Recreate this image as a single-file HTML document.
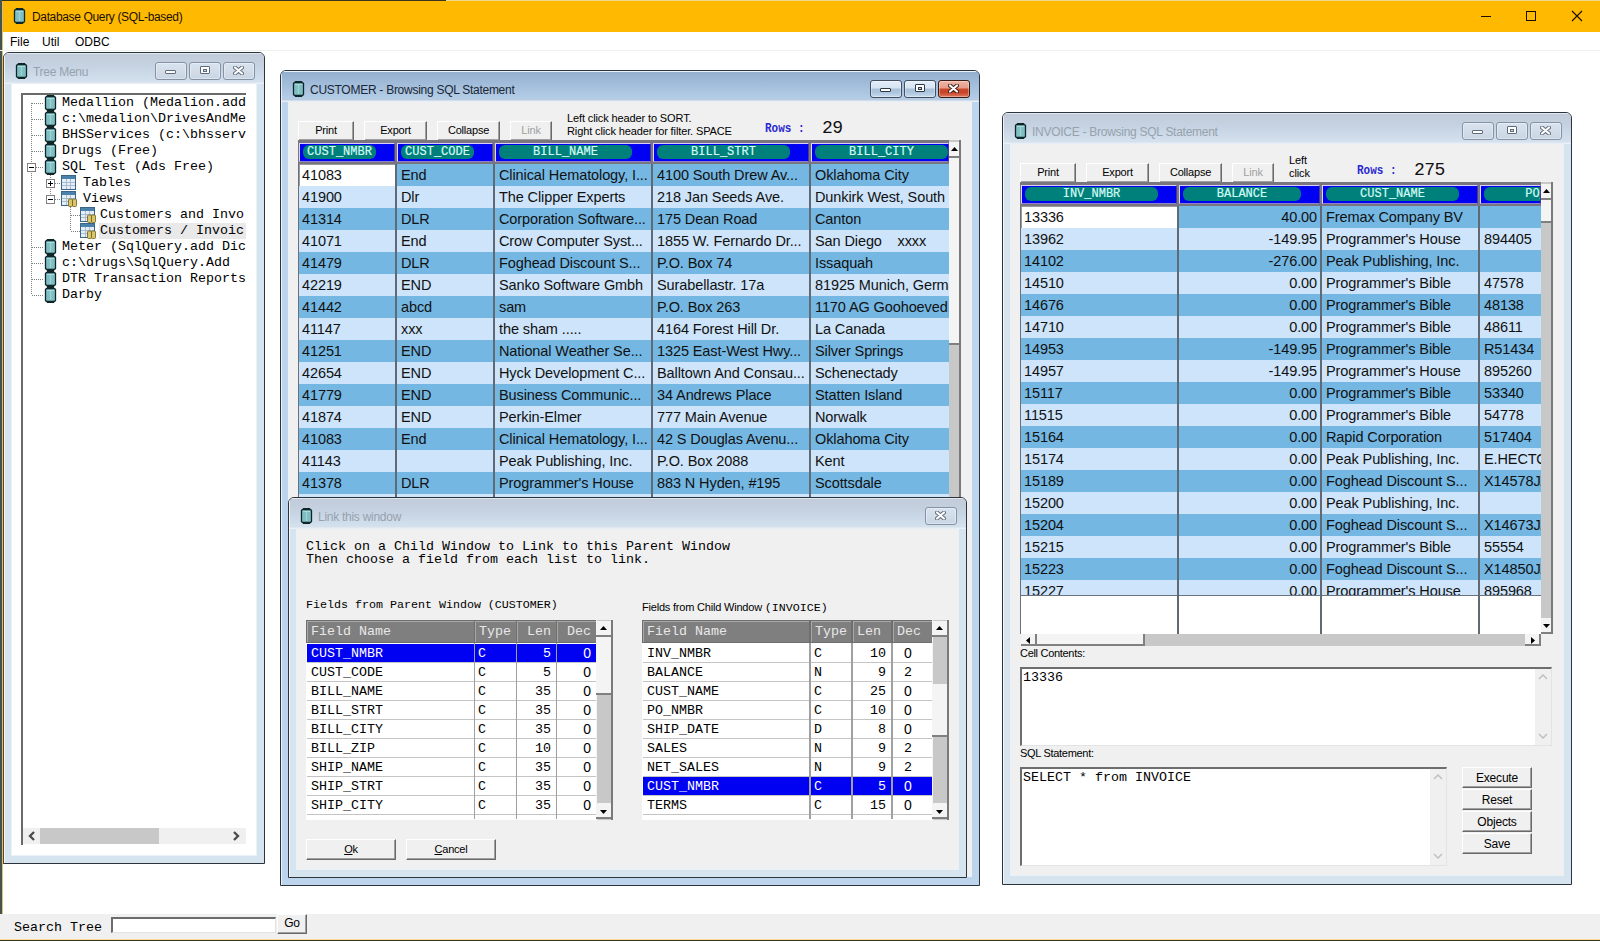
<!DOCTYPE html><html><head><meta charset="utf-8"><style>body{margin:0;width:1600px;height:941px;overflow:hidden;position:relative;background:#fff}</style></head><body>
<div style="position:absolute;left:0px;top:0px;width:1600px;height:32px;background:#ffb900"></div>
<div style="position:absolute;left:0px;top:0px;width:446px;height:1px;background:#3a3520"></div>
<div style="position:absolute;left:446px;top:0px;width:1154px;height:1px;background:#f0d98c"></div>
<div style="position:absolute;left:0px;top:0px;width:2px;height:941px;background:#45534a"></div>
<div style="position:absolute;left:2px;top:1px;width:1px;height:939px;background:#d8c07a"></div>
<svg style="position:absolute;left:13px;top:8px" width="13" height="16" viewBox="0 0 13 16"><path d="M1.5 2.5 L2.5 1.5 L10.5 1.5 L11.5 2.5 L11.5 13.5 L10.5 14.5 L2.5 14.5 L1.5 13.5 Z" fill="#7fbfc3" stroke="#0f2628" stroke-width="1.3"/><rect x="3" y="0" width="7" height="1.5" fill="#0f2628"/><rect x="3" y="14.5" width="7" height="1.5" fill="#0f2628"/><path d="M3 3.5 L10 3.5" stroke="#a9dadc" stroke-width="1"/><path d="M6.5 4 L6.5 13" stroke="#9fd2d4" stroke-width="1.2"/></svg>
<div style="position:absolute;left:32px;top:10px;white-space:pre;font-family:'Liberation Sans', sans-serif;font-size:12px;line-height:15px;color:#1a1000;letter-spacing:-0.35px">Database Query (SQL-based)</div>
<div style="position:absolute;left:1481px;top:16px;width:10px;height:1px;background:#1a0d00"></div>
<div style="position:absolute;left:1526px;top:11px;width:8px;height:8px;border:1px solid #1a0d00"></div>
<svg style="position:absolute;left:1571px;top:10px" width="12" height="12" viewBox="0 0 12 12"><path d="M1 1 L11 11 M11 1 L1 11" stroke="#1a0d00" stroke-width="1.1"/></svg>
<div style="position:absolute;left:10px;top:35px;white-space:pre;font-family:'Liberation Sans', sans-serif;font-size:12px;line-height:14px;color:#000">File</div>
<div style="position:absolute;left:42px;top:35px;white-space:pre;font-family:'Liberation Sans', sans-serif;font-size:12px;line-height:14px;color:#000">Util</div>
<div style="position:absolute;left:75px;top:35px;white-space:pre;font-family:'Liberation Sans', sans-serif;font-size:12px;line-height:14px;color:#000">ODBC</div>
<div style="position:absolute;left:0px;top:50px;width:1600px;height:1px;background:#f0f0f0"></div>
<div style="position:absolute;left:0px;top:914px;width:1600px;height:25px;background:#f0f0f0"></div>
<div style="position:absolute;left:0px;top:939px;width:1600px;height:1px;background:#ffd99a"></div>
<div style="position:absolute;left:0px;top:940px;width:1600px;height:1px;background:#3a3520"></div>
<div style="position:absolute;left:14px;top:920px;white-space:pre;font-family:'Liberation Mono', monospace;font-size:13.33px;line-height:15px;color:#000">Search Tree</div>
<div style="position:absolute;left:111px;top:917px;width:165px;height:16px;box-sizing:border-box;background:#fff;border-top:2px solid #6d6d6d;border-left:2px solid #6d6d6d;border-right:1px solid #e3e3e3;border-bottom:1px solid #e3e3e3"></div>
<div style="position:absolute;left:277px;top:914px;width:30px;height:20px;box-sizing:border-box;background:#f0f0f0;border-top:1px solid #fff;border-left:1px solid #fff;border-right:1px solid #696969;border-bottom:1px solid #696969;box-shadow:inset -1px -1px 0 #a0a0a0"></div>
<div style="position:absolute;left:277px;top:916px;width:30px;text-align:center;font-family:'Liberation Sans', sans-serif;font-size:12px;line-height:14px;color:#000;letter-spacing:-0.2px;white-space:pre">Go</div>
<div style="position:absolute;left:3px;top:52px;width:262px;height:812px;box-sizing:border-box;border:1px solid #2c333a;border-radius:6px 6px 0 0;background:#d6e4f0;overflow:hidden">
<div style="position:absolute;left:0;top:0;right:0;height:31px;background:linear-gradient(to bottom,#e0e8f3 0px,#e0e8f3 1px,#c2cbd9 1px,#c6d3e2 14px,#d2e0ee 27px,#d6e0ea 29px,#e8f0f8 30px)"></div>
<div style="position:absolute;left:0;top:0;width:1px;bottom:0;background:rgba(255,255,255,0.7)"></div>
<div style="position:absolute;left:7px;top:30px;right:7px;bottom:7px;background:#fff;box-sizing:border-box;border:1px solid #e9f1f9;border-top:1px solid #e6eef8"></div>
</div>
<svg style="position:absolute;left:15px;top:63px" width="13" height="16" viewBox="0 0 13 16"><path d="M1.5 2.5 L2.5 1.5 L10.5 1.5 L11.5 2.5 L11.5 13.5 L10.5 14.5 L2.5 14.5 L1.5 13.5 Z" fill="#7fbfc3" stroke="#0f2628" stroke-width="1.3"/><rect x="3" y="0" width="7" height="1.5" fill="#0f2628"/><rect x="3" y="14.5" width="7" height="1.5" fill="#0f2628"/><path d="M3 3.5 L10 3.5" stroke="#a9dadc" stroke-width="1"/><path d="M6.5 4 L6.5 13" stroke="#9fd2d4" stroke-width="1.2"/></svg>
<div style="position:absolute;left:33px;top:65px;white-space:pre;font-family:'Liberation Sans', sans-serif;font-size:12px;line-height:15px;color:#96a1ad;letter-spacing:-0.27px">Tree Menu</div>
<div style="position:absolute;left:155px;top:62px;width:32px;height:18px;box-sizing:border-box;border:1px solid #8592a4;border-radius:3px;background:linear-gradient(to bottom,#d9e3ef 0%,#d3dde9 50%,#c9d5e3 100%);box-shadow:inset 0 0 0 1px rgba(255,255,255,0.35)"></div>
<div style="position:absolute;left:165px;top:70px;width:9px;height:2px;box-sizing:content-box;background:#fff;border:1px solid #5f6b7a;border-radius:1px"></div>
<div style="position:absolute;left:189px;top:62px;width:32px;height:18px;box-sizing:border-box;border:1px solid #8592a4;border-radius:3px;background:linear-gradient(to bottom,#d9e3ef 0%,#d3dde9 50%,#c9d5e3 100%);box-shadow:inset 0 0 0 1px rgba(255,255,255,0.35)"></div>
<div style="position:absolute;left:200px;top:66px;width:8px;height:6px;box-sizing:content-box;border:1px solid #5f6b7a;background:#fff;border-radius:1px"><div style="position:absolute;left:2px;top:2px;width:2px;height:1px;border:1px solid #5f6b7a;background:#cdd8e4"></div></div>
<div style="position:absolute;left:223px;top:62px;width:32px;height:18px;box-sizing:border-box;border:1px solid #8592a4;border-radius:3px;background:linear-gradient(to bottom,#d9e3ef 0%,#d3dde9 50%,#c9d5e3 100%);box-shadow:inset 0 0 0 1px rgba(255,255,255,0.35)"></div>
<svg style="position:absolute;left:233px;top:66px" width="11" height="9" viewBox="0 0 11 9"><path d="M2 1.5 L9 7.5 M9 1.5 L2 7.5" stroke="#5f6b7a" stroke-width="4" stroke-linecap="round"/><path d="M2 1.5 L9 7.5 M9 1.5 L2 7.5" stroke="#fff" stroke-width="2.2" stroke-linecap="round"/></svg>
<div style="position:absolute;left:3px;top:58px;width:1px;height:806px;background:#5e4a22"></div>
<div style="position:absolute;left:21px;top:93px;width:225px;height:752px;box-sizing:border-box;background:#fff;border-top:2px solid #6a6a6a;border-left:2px solid #6a6a6a"></div>
<div style="position:absolute;left:31px;top:103px;width:1px;height:191px;background:repeating-linear-gradient(to bottom,#808080 0 1px,transparent 1px 2px)"></div>
<div style="position:absolute;left:50px;top:175px;width:1px;height:24px;background:repeating-linear-gradient(to bottom,#808080 0 1px,transparent 1px 2px)"></div>
<div style="position:absolute;left:70px;top:207px;width:1px;height:23px;background:repeating-linear-gradient(to bottom,#808080 0 1px,transparent 1px 2px)"></div>
<div style="position:absolute;left:32px;top:103px;width:11px;height:1px;background:repeating-linear-gradient(to right,#808080 0 1px,transparent 1px 2px)"></div>
<svg style="position:absolute;left:44px;top:95px" width="13" height="16" viewBox="0 0 13 16"><path d="M1.5 2.5 L2.5 1.5 L10.5 1.5 L11.5 2.5 L11.5 13.5 L10.5 14.5 L2.5 14.5 L1.5 13.5 Z" fill="#7fbfc3" stroke="#0f2628" stroke-width="1.3"/><rect x="3" y="0" width="7" height="1.5" fill="#0f2628"/><rect x="3" y="14.5" width="7" height="1.5" fill="#0f2628"/><path d="M3 3.5 L10 3.5" stroke="#a9dadc" stroke-width="1"/><path d="M6.5 4 L6.5 13" stroke="#9fd2d4" stroke-width="1.2"/></svg>
<div style="position:absolute;left:62px;top:95px;white-space:pre;font-family:'Liberation Mono', monospace;font-size:13.33px;line-height:15px;color:#000">Medallion (Medalion.add</div>
<div style="position:absolute;left:32px;top:119px;width:11px;height:1px;background:repeating-linear-gradient(to right,#808080 0 1px,transparent 1px 2px)"></div>
<svg style="position:absolute;left:44px;top:111px" width="13" height="16" viewBox="0 0 13 16"><path d="M1.5 2.5 L2.5 1.5 L10.5 1.5 L11.5 2.5 L11.5 13.5 L10.5 14.5 L2.5 14.5 L1.5 13.5 Z" fill="#7fbfc3" stroke="#0f2628" stroke-width="1.3"/><rect x="3" y="0" width="7" height="1.5" fill="#0f2628"/><rect x="3" y="14.5" width="7" height="1.5" fill="#0f2628"/><path d="M3 3.5 L10 3.5" stroke="#a9dadc" stroke-width="1"/><path d="M6.5 4 L6.5 13" stroke="#9fd2d4" stroke-width="1.2"/></svg>
<div style="position:absolute;left:62px;top:111px;white-space:pre;font-family:'Liberation Mono', monospace;font-size:13.33px;line-height:15px;color:#000">c:\medalion\DrivesAndMe</div>
<div style="position:absolute;left:32px;top:135px;width:11px;height:1px;background:repeating-linear-gradient(to right,#808080 0 1px,transparent 1px 2px)"></div>
<svg style="position:absolute;left:44px;top:127px" width="13" height="16" viewBox="0 0 13 16"><path d="M1.5 2.5 L2.5 1.5 L10.5 1.5 L11.5 2.5 L11.5 13.5 L10.5 14.5 L2.5 14.5 L1.5 13.5 Z" fill="#7fbfc3" stroke="#0f2628" stroke-width="1.3"/><rect x="3" y="0" width="7" height="1.5" fill="#0f2628"/><rect x="3" y="14.5" width="7" height="1.5" fill="#0f2628"/><path d="M3 3.5 L10 3.5" stroke="#a9dadc" stroke-width="1"/><path d="M6.5 4 L6.5 13" stroke="#9fd2d4" stroke-width="1.2"/></svg>
<div style="position:absolute;left:62px;top:127px;white-space:pre;font-family:'Liberation Mono', monospace;font-size:13.33px;line-height:15px;color:#000">BHSServices (c:\bhsserv</div>
<div style="position:absolute;left:32px;top:151px;width:11px;height:1px;background:repeating-linear-gradient(to right,#808080 0 1px,transparent 1px 2px)"></div>
<svg style="position:absolute;left:44px;top:143px" width="13" height="16" viewBox="0 0 13 16"><path d="M1.5 2.5 L2.5 1.5 L10.5 1.5 L11.5 2.5 L11.5 13.5 L10.5 14.5 L2.5 14.5 L1.5 13.5 Z" fill="#7fbfc3" stroke="#0f2628" stroke-width="1.3"/><rect x="3" y="0" width="7" height="1.5" fill="#0f2628"/><rect x="3" y="14.5" width="7" height="1.5" fill="#0f2628"/><path d="M3 3.5 L10 3.5" stroke="#a9dadc" stroke-width="1"/><path d="M6.5 4 L6.5 13" stroke="#9fd2d4" stroke-width="1.2"/></svg>
<div style="position:absolute;left:62px;top:143px;white-space:pre;font-family:'Liberation Mono', monospace;font-size:13.33px;line-height:15px;color:#000">Drugs (Free)</div>
<div style="position:absolute;left:32px;top:167px;width:11px;height:1px;background:repeating-linear-gradient(to right,#808080 0 1px,transparent 1px 2px)"></div>
<svg style="position:absolute;left:44px;top:159px" width="13" height="16" viewBox="0 0 13 16"><path d="M1.5 2.5 L2.5 1.5 L10.5 1.5 L11.5 2.5 L11.5 13.5 L10.5 14.5 L2.5 14.5 L1.5 13.5 Z" fill="#7fbfc3" stroke="#0f2628" stroke-width="1.3"/><rect x="3" y="0" width="7" height="1.5" fill="#0f2628"/><rect x="3" y="14.5" width="7" height="1.5" fill="#0f2628"/><path d="M3 3.5 L10 3.5" stroke="#a9dadc" stroke-width="1"/><path d="M6.5 4 L6.5 13" stroke="#9fd2d4" stroke-width="1.2"/></svg>
<div style="position:absolute;left:62px;top:159px;white-space:pre;font-family:'Liberation Mono', monospace;font-size:13.33px;line-height:15px;color:#000">SQL Test (Ads Free)</div>
<div style="position:absolute;left:51px;top:183px;width:9px;height:1px;background:repeating-linear-gradient(to right,#808080 0 1px,transparent 1px 2px)"></div>
<svg style="position:absolute;left:61px;top:175px" width="16" height="16" viewBox="0 0 16 16"><rect x="0.5" y="0.5" width="14" height="14" fill="#e6edf4" stroke="#3b6486"/><rect x="1" y="1" width="13" height="3" fill="#4a82ad"/><path d="M1 7.5 H14 M1 10.5 H14 M5.5 4 V14 M9.5 4 V14" stroke="#a6bdd2" stroke-width="1"/></svg>
<div style="position:absolute;left:83px;top:175px;white-space:pre;font-family:'Liberation Mono', monospace;font-size:13.33px;line-height:15px;color:#000">Tables</div>
<div style="position:absolute;left:51px;top:199px;width:9px;height:1px;background:repeating-linear-gradient(to right,#808080 0 1px,transparent 1px 2px)"></div>
<svg style="position:absolute;left:61px;top:191px" width="16" height="16" viewBox="0 0 16 16"><rect x="0.5" y="0.5" width="14" height="14" fill="#e6edf4" stroke="#3b6486"/><rect x="1" y="1" width="13" height="3" fill="#4a82ad"/><path d="M1 7.5 H14 M1 10.5 H14 M5.5 4 V14 M9.5 4 V14" stroke="#a6bdd2" stroke-width="1"/><rect x="7.5" y="8" width="4" height="7.5" rx="1" fill="#d9c66a" stroke="#6f6020" stroke-width="0.8"/><rect x="11.5" y="8" width="4" height="7.5" rx="1" fill="#d9c66a" stroke="#6f6020" stroke-width="0.8"/></svg>
<div style="position:absolute;left:83px;top:191px;white-space:pre;font-family:'Liberation Mono', monospace;font-size:13.33px;line-height:15px;color:#000">Views</div>
<div style="position:absolute;left:71px;top:215px;width:9px;height:1px;background:repeating-linear-gradient(to right,#808080 0 1px,transparent 1px 2px)"></div>
<svg style="position:absolute;left:80px;top:207px" width="16" height="16" viewBox="0 0 16 16"><rect x="0.5" y="0.5" width="14" height="14" fill="#e6edf4" stroke="#3b6486"/><rect x="1" y="1" width="13" height="3" fill="#4a82ad"/><path d="M1 7.5 H14 M1 10.5 H14 M5.5 4 V14 M9.5 4 V14" stroke="#a6bdd2" stroke-width="1"/><rect x="7.5" y="8" width="4" height="7.5" rx="1" fill="#d9c66a" stroke="#6f6020" stroke-width="0.8"/><rect x="11.5" y="8" width="4" height="7.5" rx="1" fill="#d9c66a" stroke="#6f6020" stroke-width="0.8"/></svg>
<div style="position:absolute;left:100px;top:207px;white-space:pre;font-family:'Liberation Mono', monospace;font-size:13.33px;line-height:15px;color:#000">Customers and Invo</div>
<div style="position:absolute;left:71px;top:231px;width:9px;height:1px;background:repeating-linear-gradient(to right,#808080 0 1px,transparent 1px 2px)"></div>
<div style="position:absolute;left:99px;top:223px;width:147px;height:16px;background:#e9e9e9"></div>
<svg style="position:absolute;left:80px;top:223px" width="16" height="16" viewBox="0 0 16 16"><rect x="0.5" y="0.5" width="14" height="14" fill="#e6edf4" stroke="#3b6486"/><rect x="1" y="1" width="13" height="3" fill="#4a82ad"/><path d="M1 7.5 H14 M1 10.5 H14 M5.5 4 V14 M9.5 4 V14" stroke="#a6bdd2" stroke-width="1"/><rect x="7.5" y="8" width="4" height="7.5" rx="1" fill="#d9c66a" stroke="#6f6020" stroke-width="0.8"/><rect x="11.5" y="8" width="4" height="7.5" rx="1" fill="#d9c66a" stroke="#6f6020" stroke-width="0.8"/></svg>
<div style="position:absolute;left:100px;top:223px;white-space:pre;font-family:'Liberation Mono', monospace;font-size:13.33px;line-height:15px;color:#000">Customers / Invoic</div>
<div style="position:absolute;left:32px;top:247px;width:11px;height:1px;background:repeating-linear-gradient(to right,#808080 0 1px,transparent 1px 2px)"></div>
<svg style="position:absolute;left:44px;top:239px" width="13" height="16" viewBox="0 0 13 16"><path d="M1.5 2.5 L2.5 1.5 L10.5 1.5 L11.5 2.5 L11.5 13.5 L10.5 14.5 L2.5 14.5 L1.5 13.5 Z" fill="#7fbfc3" stroke="#0f2628" stroke-width="1.3"/><rect x="3" y="0" width="7" height="1.5" fill="#0f2628"/><rect x="3" y="14.5" width="7" height="1.5" fill="#0f2628"/><path d="M3 3.5 L10 3.5" stroke="#a9dadc" stroke-width="1"/><path d="M6.5 4 L6.5 13" stroke="#9fd2d4" stroke-width="1.2"/></svg>
<div style="position:absolute;left:62px;top:239px;white-space:pre;font-family:'Liberation Mono', monospace;font-size:13.33px;line-height:15px;color:#000">Meter (SqlQuery.add Dic</div>
<div style="position:absolute;left:32px;top:263px;width:11px;height:1px;background:repeating-linear-gradient(to right,#808080 0 1px,transparent 1px 2px)"></div>
<svg style="position:absolute;left:44px;top:255px" width="13" height="16" viewBox="0 0 13 16"><path d="M1.5 2.5 L2.5 1.5 L10.5 1.5 L11.5 2.5 L11.5 13.5 L10.5 14.5 L2.5 14.5 L1.5 13.5 Z" fill="#7fbfc3" stroke="#0f2628" stroke-width="1.3"/><rect x="3" y="0" width="7" height="1.5" fill="#0f2628"/><rect x="3" y="14.5" width="7" height="1.5" fill="#0f2628"/><path d="M3 3.5 L10 3.5" stroke="#a9dadc" stroke-width="1"/><path d="M6.5 4 L6.5 13" stroke="#9fd2d4" stroke-width="1.2"/></svg>
<div style="position:absolute;left:62px;top:255px;white-space:pre;font-family:'Liberation Mono', monospace;font-size:13.33px;line-height:15px;color:#000">c:\drugs\SqlQuery.Add</div>
<div style="position:absolute;left:32px;top:279px;width:11px;height:1px;background:repeating-linear-gradient(to right,#808080 0 1px,transparent 1px 2px)"></div>
<svg style="position:absolute;left:44px;top:271px" width="13" height="16" viewBox="0 0 13 16"><path d="M1.5 2.5 L2.5 1.5 L10.5 1.5 L11.5 2.5 L11.5 13.5 L10.5 14.5 L2.5 14.5 L1.5 13.5 Z" fill="#7fbfc3" stroke="#0f2628" stroke-width="1.3"/><rect x="3" y="0" width="7" height="1.5" fill="#0f2628"/><rect x="3" y="14.5" width="7" height="1.5" fill="#0f2628"/><path d="M3 3.5 L10 3.5" stroke="#a9dadc" stroke-width="1"/><path d="M6.5 4 L6.5 13" stroke="#9fd2d4" stroke-width="1.2"/></svg>
<div style="position:absolute;left:62px;top:271px;white-space:pre;font-family:'Liberation Mono', monospace;font-size:13.33px;line-height:15px;color:#000">DTR Transaction Reports</div>
<div style="position:absolute;left:32px;top:295px;width:11px;height:1px;background:repeating-linear-gradient(to right,#808080 0 1px,transparent 1px 2px)"></div>
<svg style="position:absolute;left:44px;top:287px" width="13" height="16" viewBox="0 0 13 16"><path d="M1.5 2.5 L2.5 1.5 L10.5 1.5 L11.5 2.5 L11.5 13.5 L10.5 14.5 L2.5 14.5 L1.5 13.5 Z" fill="#7fbfc3" stroke="#0f2628" stroke-width="1.3"/><rect x="3" y="0" width="7" height="1.5" fill="#0f2628"/><rect x="3" y="14.5" width="7" height="1.5" fill="#0f2628"/><path d="M3 3.5 L10 3.5" stroke="#a9dadc" stroke-width="1"/><path d="M6.5 4 L6.5 13" stroke="#9fd2d4" stroke-width="1.2"/></svg>
<div style="position:absolute;left:62px;top:287px;white-space:pre;font-family:'Liberation Mono', monospace;font-size:13.33px;line-height:15px;color:#000">Darby</div>
<div style="position:absolute;left:27px;top:163px;width:9px;height:9px;box-sizing:border-box;border:1px solid #808080;background:#fff"></div>
<div style="position:absolute;left:29px;top:167px;width:5px;height:1px;background:#000"></div>
<div style="position:absolute;left:46px;top:179px;width:9px;height:9px;box-sizing:border-box;border:1px solid #808080;background:#fff"></div>
<div style="position:absolute;left:48px;top:183px;width:5px;height:1px;background:#000"></div>
<div style="position:absolute;left:50px;top:181px;width:1px;height:5px;background:#000"></div>
<div style="position:absolute;left:46px;top:195px;width:9px;height:9px;box-sizing:border-box;border:1px solid #808080;background:#fff"></div>
<div style="position:absolute;left:48px;top:199px;width:5px;height:1px;background:#000"></div>
<div style="position:absolute;left:246px;top:93px;width:10px;height:752px;background:#fff"></div>
<div style="position:absolute;left:23px;top:828px;width:223px;height:16px;background:#f0f0f0"></div>
<div style="position:absolute;left:40px;top:828px;width:119px;height:16px;background:#c8c8c8"></div>
<svg style="position:absolute;left:28px;top:831px" width="8" height="10" viewBox="0 0 8 10"><path d="M6 1 L2 5 L6 9" fill="none" stroke="#4a4a4a" stroke-width="2.3"/></svg>
<svg style="position:absolute;left:232px;top:831px" width="8" height="10" viewBox="0 0 8 10"><path d="M2 1 L6 5 L2 9" fill="none" stroke="#4a4a4a" stroke-width="2.3"/></svg>
<div style="position:absolute;left:280px;top:70px;width:700px;height:816px;box-sizing:border-box;border:1px solid #2c333a;border-radius:6px 6px 0 0;background:#bcd4ec;overflow:hidden">
<div style="position:absolute;left:0;top:0;right:0;height:31px;background:linear-gradient(to bottom,#eaf4fb 0px,#eaf4fb 1px,#93b0d0 1px,#a3bedb 14px,#b3cce7 27px,#bccbdc 29px,#e6eef8 30px)"></div>
<div style="position:absolute;left:0;top:0;width:1px;bottom:0;background:rgba(255,255,255,0.7)"></div>
<div style="position:absolute;left:7px;top:30px;right:7px;bottom:8px;background:#f0f0f0;box-sizing:border-box;border:1px solid #e9f1f9;border-top:1px solid #e6eef8"></div>
</div>
<svg style="position:absolute;left:292px;top:81px" width="13" height="16" viewBox="0 0 13 16"><path d="M1.5 2.5 L2.5 1.5 L10.5 1.5 L11.5 2.5 L11.5 13.5 L10.5 14.5 L2.5 14.5 L1.5 13.5 Z" fill="#7fbfc3" stroke="#0f2628" stroke-width="1.3"/><rect x="3" y="0" width="7" height="1.5" fill="#0f2628"/><rect x="3" y="14.5" width="7" height="1.5" fill="#0f2628"/><path d="M3 3.5 L10 3.5" stroke="#a9dadc" stroke-width="1"/><path d="M6.5 4 L6.5 13" stroke="#9fd2d4" stroke-width="1.2"/></svg>
<div style="position:absolute;left:310px;top:83px;white-space:pre;font-family:'Liberation Sans', sans-serif;font-size:12px;line-height:15px;color:#1b2735;letter-spacing:-0.27px">CUSTOMER - Browsing SQL Statement</div>
<div style="position:absolute;left:870px;top:80px;width:32px;height:18px;box-sizing:border-box;border:1px solid #3f4e60;border-radius:3px;background:linear-gradient(to bottom,#e4eef9 0%,#d5e3f2 44%,#a9c0d9 50%,#aec5de 72%,#c9dbef 100%);box-shadow:inset 0 0 0 1px rgba(255,255,255,0.35)"></div>
<div style="position:absolute;left:880px;top:88px;width:9px;height:2px;box-sizing:content-box;background:#fff;border:1px solid #2c3846;border-radius:1px"></div>
<div style="position:absolute;left:904px;top:80px;width:32px;height:18px;box-sizing:border-box;border:1px solid #3f4e60;border-radius:3px;background:linear-gradient(to bottom,#e4eef9 0%,#d5e3f2 44%,#a9c0d9 50%,#aec5de 72%,#c9dbef 100%);box-shadow:inset 0 0 0 1px rgba(255,255,255,0.35)"></div>
<div style="position:absolute;left:915px;top:84px;width:8px;height:6px;box-sizing:content-box;border:1px solid #2c3846;background:#fff;border-radius:1px"><div style="position:absolute;left:2px;top:2px;width:2px;height:1px;border:1px solid #2c3846;background:#cdd8e4"></div></div>
<div style="position:absolute;left:938px;top:80px;width:32px;height:18px;box-sizing:border-box;border:1px solid #3b1a16;border-radius:3px;background:linear-gradient(to bottom,#edb6a6 0%,#e59d88 44%,#c9492a 50%,#c6442a 72%,#de7a5e 100%);box-shadow:inset 0 0 0 1px rgba(255,255,255,0.35)"></div>
<svg style="position:absolute;left:948px;top:84px" width="11" height="9" viewBox="0 0 11 9"><path d="M2 1.5 L9 7.5 M9 1.5 L2 7.5" stroke="#3a1a14" stroke-width="4" stroke-linecap="round"/><path d="M2 1.5 L9 7.5 M9 1.5 L2 7.5" stroke="#fff" stroke-width="2.2" stroke-linecap="round"/></svg>
<div style="position:absolute;left:298px;top:121px;width:56px;height:20px;box-sizing:border-box;background:#f0f0f0;border-top:1px solid #fff;border-left:1px solid #fff;border-right:1px solid #696969;border-bottom:1px solid #696969;box-shadow:inset -1px -1px 0 #a0a0a0"></div>
<div style="position:absolute;left:298px;top:123px;width:56px;text-align:center;font-family:'Liberation Sans', sans-serif;font-size:11px;line-height:14px;color:#000;letter-spacing:-0.2px;white-space:pre">Print</div>
<div style="position:absolute;left:364px;top:121px;width:63px;height:20px;box-sizing:border-box;background:#f0f0f0;border-top:1px solid #fff;border-left:1px solid #fff;border-right:1px solid #696969;border-bottom:1px solid #696969;box-shadow:inset -1px -1px 0 #a0a0a0"></div>
<div style="position:absolute;left:364px;top:123px;width:63px;text-align:center;font-family:'Liberation Sans', sans-serif;font-size:11px;line-height:14px;color:#000;letter-spacing:-0.2px;white-space:pre">Export</div>
<div style="position:absolute;left:437px;top:121px;width:63px;height:20px;box-sizing:border-box;background:#f0f0f0;border-top:1px solid #fff;border-left:1px solid #fff;border-right:1px solid #696969;border-bottom:1px solid #696969;box-shadow:inset -1px -1px 0 #a0a0a0"></div>
<div style="position:absolute;left:437px;top:123px;width:63px;text-align:center;font-family:'Liberation Sans', sans-serif;font-size:11px;line-height:14px;color:#000;letter-spacing:-0.2px;white-space:pre">Collapse</div>
<div style="position:absolute;left:510px;top:121px;width:42px;height:20px;box-sizing:border-box;background:#f0f0f0;border-top:1px solid #fff;border-left:1px solid #fff;border-right:1px solid #696969;border-bottom:1px solid #696969;box-shadow:inset -1px -1px 0 #a0a0a0"></div>
<div style="position:absolute;left:510px;top:123px;width:42px;text-align:center;font-family:'Liberation Sans', sans-serif;font-size:11px;line-height:14px;color:#a0a0a0;letter-spacing:-0.2px;white-space:pre">Link</div>
<div style="position:absolute;left:567px;top:112px;white-space:pre;font-family:'Liberation Sans', sans-serif;font-size:11px;line-height:13px;color:#000;letter-spacing:-0.12px">Left click header to SORT.</div>
<div style="position:absolute;left:567px;top:125px;white-space:pre;font-family:'Liberation Sans', sans-serif;font-size:11px;line-height:13px;color:#000;letter-spacing:-0.12px">Right click header for filter. SPACE</div>
<div style="position:absolute;left:567px;top:138px;white-space:pre;font-family:'Liberation Sans', sans-serif;font-size:11px;line-height:13px;color:#000;letter-spacing:-0.12px">to Expand cell.</div>
<div style="position:absolute;left:765px;top:121px;white-space:pre;font-family:'Liberation Mono', monospace;font-weight:bold;font-size:11px;transform:scaleY(1.12);transform-origin:0 0;line-height:14px;color:#2828d0">Rows :</div>
<div style="position:absolute;left:822px;top:118px;white-space:pre;font-family:'Liberation Mono', monospace;font-size:18px;line-height:21px;color:#111;letter-spacing:-0.6px">29</div>
<div style="position:absolute;left:298px;top:140px;width:651px;height:24px;background:#7a7680"></div>
<div style="position:absolute;left:299px;top:143px;width:96px;height:19px;background:#0000f2;box-sizing:border-box;border-top:1px solid #d8d0f8;border-left:1px solid #e0d8f8;border-right:1px solid #4838a0;border-bottom:1px solid #9080d0;overflow:hidden"><div style="position:absolute;left:3px;top:1px;width:73px;height:14px;background:#00807a;border-radius:6px;text-align:center;font-family:'Liberation Mono', monospace;font-weight:normal;font-size:12px;line-height:14px;color:#d2fbf4;-webkit-text-stroke:0.2px #d2fbf4">CUST_NMBR</div></div>
<div style="position:absolute;left:397px;top:143px;width:96px;height:19px;background:#0000f2;box-sizing:border-box;border-top:1px solid #d8d0f8;border-left:1px solid #e0d8f8;border-right:1px solid #4838a0;border-bottom:1px solid #9080d0;overflow:hidden"><div style="position:absolute;left:3px;top:1px;width:73px;height:14px;background:#00807a;border-radius:6px;text-align:center;font-family:'Liberation Mono', monospace;font-weight:normal;font-size:12px;line-height:14px;color:#d2fbf4;-webkit-text-stroke:0.2px #d2fbf4">CUST_CODE</div></div>
<div style="position:absolute;left:495px;top:143px;width:156px;height:19px;background:#0000f2;box-sizing:border-box;border-top:1px solid #d8d0f8;border-left:1px solid #e0d8f8;border-right:1px solid #4838a0;border-bottom:1px solid #9080d0;overflow:hidden"><div style="position:absolute;left:3px;top:1px;width:133px;height:14px;background:#00807a;border-radius:6px;text-align:center;font-family:'Liberation Mono', monospace;font-weight:normal;font-size:12px;line-height:14px;color:#d2fbf4;-webkit-text-stroke:0.2px #d2fbf4">BILL_NAME</div></div>
<div style="position:absolute;left:653px;top:143px;width:156px;height:19px;background:#0000f2;box-sizing:border-box;border-top:1px solid #d8d0f8;border-left:1px solid #e0d8f8;border-right:1px solid #4838a0;border-bottom:1px solid #9080d0;overflow:hidden"><div style="position:absolute;left:3px;top:1px;width:133px;height:14px;background:#00807a;border-radius:6px;text-align:center;font-family:'Liberation Mono', monospace;font-weight:normal;font-size:12px;line-height:14px;color:#d2fbf4;-webkit-text-stroke:0.2px #d2fbf4">BILL_STRT</div></div>
<div style="position:absolute;left:811px;top:143px;width:138px;height:19px;background:#0000f2;box-sizing:border-box;border-top:1px solid #d8d0f8;border-left:1px solid #e0d8f8;border-right:1px solid #4838a0;border-bottom:1px solid #9080d0;overflow:hidden"><div style="position:absolute;left:3px;top:1px;width:133px;height:14px;background:#00807a;border-radius:6px;text-align:center;font-family:'Liberation Mono', monospace;font-weight:normal;font-size:12px;line-height:14px;color:#d2fbf4;-webkit-text-stroke:0.2px #d2fbf4">BILL_CITY</div></div>
<div style="position:absolute;left:298px;top:164px;width:1px;height:352px;background:#6a7078"></div>
<div style="position:absolute;left:299px;top:164px;width:650px;height:352px;overflow:hidden">
<div style="position:absolute;left:-1px;top:0px;width:97px;height:22px;box-sizing:border-box;background:#fff;padding-left:4px;text-align:left;font-family:'Liberation Sans', sans-serif;font-size:14.5px;line-height:23px;color:#111;letter-spacing:-0.1px;white-space:pre;overflow:hidden">41083</div>
<div style="position:absolute;left:98px;top:0px;width:96px;height:22px;box-sizing:border-box;background:#74b7e3;padding-left:4px;text-align:left;font-family:'Liberation Sans', sans-serif;font-size:14.5px;line-height:23px;color:#111;letter-spacing:-0.1px;white-space:pre;overflow:hidden">End</div>
<div style="position:absolute;left:196px;top:0px;width:156px;height:22px;box-sizing:border-box;background:#74b7e3;padding-left:4px;text-align:left;font-family:'Liberation Sans', sans-serif;font-size:14.5px;line-height:23px;color:#111;letter-spacing:-0.1px;white-space:pre;overflow:hidden">Clinical Hematology, I...</div>
<div style="position:absolute;left:354px;top:0px;width:156px;height:22px;box-sizing:border-box;background:#74b7e3;padding-left:4px;text-align:left;font-family:'Liberation Sans', sans-serif;font-size:14.5px;line-height:23px;color:#111;letter-spacing:-0.1px;white-space:pre;overflow:hidden">4100 South Drew Av...</div>
<div style="position:absolute;left:512px;top:0px;width:138px;height:22px;box-sizing:border-box;background:#74b7e3;padding-left:4px;text-align:left;font-family:'Liberation Sans', sans-serif;font-size:14.5px;line-height:23px;color:#111;letter-spacing:-0.1px;white-space:pre;overflow:hidden">Oklahoma City</div>
<div style="position:absolute;left:-1px;top:22px;width:97px;height:22px;box-sizing:border-box;background:#cde4fa;padding-left:4px;text-align:left;font-family:'Liberation Sans', sans-serif;font-size:14.5px;line-height:23px;color:#111;letter-spacing:-0.1px;white-space:pre;overflow:hidden">41900</div>
<div style="position:absolute;left:98px;top:22px;width:96px;height:22px;box-sizing:border-box;background:#cde4fa;padding-left:4px;text-align:left;font-family:'Liberation Sans', sans-serif;font-size:14.5px;line-height:23px;color:#111;letter-spacing:-0.1px;white-space:pre;overflow:hidden">Dlr</div>
<div style="position:absolute;left:196px;top:22px;width:156px;height:22px;box-sizing:border-box;background:#cde4fa;padding-left:4px;text-align:left;font-family:'Liberation Sans', sans-serif;font-size:14.5px;line-height:23px;color:#111;letter-spacing:-0.1px;white-space:pre;overflow:hidden">The Clipper Experts</div>
<div style="position:absolute;left:354px;top:22px;width:156px;height:22px;box-sizing:border-box;background:#cde4fa;padding-left:4px;text-align:left;font-family:'Liberation Sans', sans-serif;font-size:14.5px;line-height:23px;color:#111;letter-spacing:-0.1px;white-space:pre;overflow:hidden">218 Jan Seeds Ave.</div>
<div style="position:absolute;left:512px;top:22px;width:138px;height:22px;box-sizing:border-box;background:#cde4fa;padding-left:4px;text-align:left;font-family:'Liberation Sans', sans-serif;font-size:14.5px;line-height:23px;color:#111;letter-spacing:-0.1px;white-space:pre;overflow:hidden">Dunkirk West, South</div>
<div style="position:absolute;left:-1px;top:44px;width:97px;height:22px;box-sizing:border-box;background:#74b7e3;padding-left:4px;text-align:left;font-family:'Liberation Sans', sans-serif;font-size:14.5px;line-height:23px;color:#111;letter-spacing:-0.1px;white-space:pre;overflow:hidden">41314</div>
<div style="position:absolute;left:98px;top:44px;width:96px;height:22px;box-sizing:border-box;background:#74b7e3;padding-left:4px;text-align:left;font-family:'Liberation Sans', sans-serif;font-size:14.5px;line-height:23px;color:#111;letter-spacing:-0.1px;white-space:pre;overflow:hidden">DLR</div>
<div style="position:absolute;left:196px;top:44px;width:156px;height:22px;box-sizing:border-box;background:#74b7e3;padding-left:4px;text-align:left;font-family:'Liberation Sans', sans-serif;font-size:14.5px;line-height:23px;color:#111;letter-spacing:-0.1px;white-space:pre;overflow:hidden">Corporation Software...</div>
<div style="position:absolute;left:354px;top:44px;width:156px;height:22px;box-sizing:border-box;background:#74b7e3;padding-left:4px;text-align:left;font-family:'Liberation Sans', sans-serif;font-size:14.5px;line-height:23px;color:#111;letter-spacing:-0.1px;white-space:pre;overflow:hidden">175 Dean Road</div>
<div style="position:absolute;left:512px;top:44px;width:138px;height:22px;box-sizing:border-box;background:#74b7e3;padding-left:4px;text-align:left;font-family:'Liberation Sans', sans-serif;font-size:14.5px;line-height:23px;color:#111;letter-spacing:-0.1px;white-space:pre;overflow:hidden">Canton</div>
<div style="position:absolute;left:-1px;top:66px;width:97px;height:22px;box-sizing:border-box;background:#cde4fa;padding-left:4px;text-align:left;font-family:'Liberation Sans', sans-serif;font-size:14.5px;line-height:23px;color:#111;letter-spacing:-0.1px;white-space:pre;overflow:hidden">41071</div>
<div style="position:absolute;left:98px;top:66px;width:96px;height:22px;box-sizing:border-box;background:#cde4fa;padding-left:4px;text-align:left;font-family:'Liberation Sans', sans-serif;font-size:14.5px;line-height:23px;color:#111;letter-spacing:-0.1px;white-space:pre;overflow:hidden">End</div>
<div style="position:absolute;left:196px;top:66px;width:156px;height:22px;box-sizing:border-box;background:#cde4fa;padding-left:4px;text-align:left;font-family:'Liberation Sans', sans-serif;font-size:14.5px;line-height:23px;color:#111;letter-spacing:-0.1px;white-space:pre;overflow:hidden">Crow Computer Syst...</div>
<div style="position:absolute;left:354px;top:66px;width:156px;height:22px;box-sizing:border-box;background:#cde4fa;padding-left:4px;text-align:left;font-family:'Liberation Sans', sans-serif;font-size:14.5px;line-height:23px;color:#111;letter-spacing:-0.1px;white-space:pre;overflow:hidden">1855 W. Fernardo Dr...</div>
<div style="position:absolute;left:512px;top:66px;width:138px;height:22px;box-sizing:border-box;background:#cde4fa;padding-left:4px;text-align:left;font-family:'Liberation Sans', sans-serif;font-size:14.5px;line-height:23px;color:#111;letter-spacing:-0.1px;white-space:pre;overflow:hidden">San Diego    xxxx</div>
<div style="position:absolute;left:-1px;top:88px;width:97px;height:22px;box-sizing:border-box;background:#74b7e3;padding-left:4px;text-align:left;font-family:'Liberation Sans', sans-serif;font-size:14.5px;line-height:23px;color:#111;letter-spacing:-0.1px;white-space:pre;overflow:hidden">41479</div>
<div style="position:absolute;left:98px;top:88px;width:96px;height:22px;box-sizing:border-box;background:#74b7e3;padding-left:4px;text-align:left;font-family:'Liberation Sans', sans-serif;font-size:14.5px;line-height:23px;color:#111;letter-spacing:-0.1px;white-space:pre;overflow:hidden">DLR</div>
<div style="position:absolute;left:196px;top:88px;width:156px;height:22px;box-sizing:border-box;background:#74b7e3;padding-left:4px;text-align:left;font-family:'Liberation Sans', sans-serif;font-size:14.5px;line-height:23px;color:#111;letter-spacing:-0.1px;white-space:pre;overflow:hidden">Foghead Discount S...</div>
<div style="position:absolute;left:354px;top:88px;width:156px;height:22px;box-sizing:border-box;background:#74b7e3;padding-left:4px;text-align:left;font-family:'Liberation Sans', sans-serif;font-size:14.5px;line-height:23px;color:#111;letter-spacing:-0.1px;white-space:pre;overflow:hidden">P.O. Box 74</div>
<div style="position:absolute;left:512px;top:88px;width:138px;height:22px;box-sizing:border-box;background:#74b7e3;padding-left:4px;text-align:left;font-family:'Liberation Sans', sans-serif;font-size:14.5px;line-height:23px;color:#111;letter-spacing:-0.1px;white-space:pre;overflow:hidden">Issaquah</div>
<div style="position:absolute;left:-1px;top:110px;width:97px;height:22px;box-sizing:border-box;background:#cde4fa;padding-left:4px;text-align:left;font-family:'Liberation Sans', sans-serif;font-size:14.5px;line-height:23px;color:#111;letter-spacing:-0.1px;white-space:pre;overflow:hidden">42219</div>
<div style="position:absolute;left:98px;top:110px;width:96px;height:22px;box-sizing:border-box;background:#cde4fa;padding-left:4px;text-align:left;font-family:'Liberation Sans', sans-serif;font-size:14.5px;line-height:23px;color:#111;letter-spacing:-0.1px;white-space:pre;overflow:hidden">END</div>
<div style="position:absolute;left:196px;top:110px;width:156px;height:22px;box-sizing:border-box;background:#cde4fa;padding-left:4px;text-align:left;font-family:'Liberation Sans', sans-serif;font-size:14.5px;line-height:23px;color:#111;letter-spacing:-0.1px;white-space:pre;overflow:hidden">Sanko Software Gmbh</div>
<div style="position:absolute;left:354px;top:110px;width:156px;height:22px;box-sizing:border-box;background:#cde4fa;padding-left:4px;text-align:left;font-family:'Liberation Sans', sans-serif;font-size:14.5px;line-height:23px;color:#111;letter-spacing:-0.1px;white-space:pre;overflow:hidden">Surabellastr. 17a</div>
<div style="position:absolute;left:512px;top:110px;width:138px;height:22px;box-sizing:border-box;background:#cde4fa;padding-left:4px;text-align:left;font-family:'Liberation Sans', sans-serif;font-size:14.5px;line-height:23px;color:#111;letter-spacing:-0.1px;white-space:pre;overflow:hidden">81925 Munich, Germany</div>
<div style="position:absolute;left:-1px;top:132px;width:97px;height:22px;box-sizing:border-box;background:#74b7e3;padding-left:4px;text-align:left;font-family:'Liberation Sans', sans-serif;font-size:14.5px;line-height:23px;color:#111;letter-spacing:-0.1px;white-space:pre;overflow:hidden">41442</div>
<div style="position:absolute;left:98px;top:132px;width:96px;height:22px;box-sizing:border-box;background:#74b7e3;padding-left:4px;text-align:left;font-family:'Liberation Sans', sans-serif;font-size:14.5px;line-height:23px;color:#111;letter-spacing:-0.1px;white-space:pre;overflow:hidden">abcd</div>
<div style="position:absolute;left:196px;top:132px;width:156px;height:22px;box-sizing:border-box;background:#74b7e3;padding-left:4px;text-align:left;font-family:'Liberation Sans', sans-serif;font-size:14.5px;line-height:23px;color:#111;letter-spacing:-0.1px;white-space:pre;overflow:hidden">sam</div>
<div style="position:absolute;left:354px;top:132px;width:156px;height:22px;box-sizing:border-box;background:#74b7e3;padding-left:4px;text-align:left;font-family:'Liberation Sans', sans-serif;font-size:14.5px;line-height:23px;color:#111;letter-spacing:-0.1px;white-space:pre;overflow:hidden">P.O. Box 263</div>
<div style="position:absolute;left:512px;top:132px;width:138px;height:22px;box-sizing:border-box;background:#74b7e3;padding-left:4px;text-align:left;font-family:'Liberation Sans', sans-serif;font-size:14.5px;line-height:23px;color:#111;letter-spacing:-0.1px;white-space:pre;overflow:hidden">1170 AG Goohoeved..</div>
<div style="position:absolute;left:-1px;top:154px;width:97px;height:22px;box-sizing:border-box;background:#cde4fa;padding-left:4px;text-align:left;font-family:'Liberation Sans', sans-serif;font-size:14.5px;line-height:23px;color:#111;letter-spacing:-0.1px;white-space:pre;overflow:hidden">41147</div>
<div style="position:absolute;left:98px;top:154px;width:96px;height:22px;box-sizing:border-box;background:#cde4fa;padding-left:4px;text-align:left;font-family:'Liberation Sans', sans-serif;font-size:14.5px;line-height:23px;color:#111;letter-spacing:-0.1px;white-space:pre;overflow:hidden">xxx</div>
<div style="position:absolute;left:196px;top:154px;width:156px;height:22px;box-sizing:border-box;background:#cde4fa;padding-left:4px;text-align:left;font-family:'Liberation Sans', sans-serif;font-size:14.5px;line-height:23px;color:#111;letter-spacing:-0.1px;white-space:pre;overflow:hidden">the sham .....</div>
<div style="position:absolute;left:354px;top:154px;width:156px;height:22px;box-sizing:border-box;background:#cde4fa;padding-left:4px;text-align:left;font-family:'Liberation Sans', sans-serif;font-size:14.5px;line-height:23px;color:#111;letter-spacing:-0.1px;white-space:pre;overflow:hidden">4164 Forest Hill Dr.</div>
<div style="position:absolute;left:512px;top:154px;width:138px;height:22px;box-sizing:border-box;background:#cde4fa;padding-left:4px;text-align:left;font-family:'Liberation Sans', sans-serif;font-size:14.5px;line-height:23px;color:#111;letter-spacing:-0.1px;white-space:pre;overflow:hidden">La Canada</div>
<div style="position:absolute;left:-1px;top:176px;width:97px;height:22px;box-sizing:border-box;background:#74b7e3;padding-left:4px;text-align:left;font-family:'Liberation Sans', sans-serif;font-size:14.5px;line-height:23px;color:#111;letter-spacing:-0.1px;white-space:pre;overflow:hidden">41251</div>
<div style="position:absolute;left:98px;top:176px;width:96px;height:22px;box-sizing:border-box;background:#74b7e3;padding-left:4px;text-align:left;font-family:'Liberation Sans', sans-serif;font-size:14.5px;line-height:23px;color:#111;letter-spacing:-0.1px;white-space:pre;overflow:hidden">END</div>
<div style="position:absolute;left:196px;top:176px;width:156px;height:22px;box-sizing:border-box;background:#74b7e3;padding-left:4px;text-align:left;font-family:'Liberation Sans', sans-serif;font-size:14.5px;line-height:23px;color:#111;letter-spacing:-0.1px;white-space:pre;overflow:hidden">National Weather Se...</div>
<div style="position:absolute;left:354px;top:176px;width:156px;height:22px;box-sizing:border-box;background:#74b7e3;padding-left:4px;text-align:left;font-family:'Liberation Sans', sans-serif;font-size:14.5px;line-height:23px;color:#111;letter-spacing:-0.1px;white-space:pre;overflow:hidden">1325 East-West Hwy...</div>
<div style="position:absolute;left:512px;top:176px;width:138px;height:22px;box-sizing:border-box;background:#74b7e3;padding-left:4px;text-align:left;font-family:'Liberation Sans', sans-serif;font-size:14.5px;line-height:23px;color:#111;letter-spacing:-0.1px;white-space:pre;overflow:hidden">Silver Springs</div>
<div style="position:absolute;left:-1px;top:198px;width:97px;height:22px;box-sizing:border-box;background:#cde4fa;padding-left:4px;text-align:left;font-family:'Liberation Sans', sans-serif;font-size:14.5px;line-height:23px;color:#111;letter-spacing:-0.1px;white-space:pre;overflow:hidden">42654</div>
<div style="position:absolute;left:98px;top:198px;width:96px;height:22px;box-sizing:border-box;background:#cde4fa;padding-left:4px;text-align:left;font-family:'Liberation Sans', sans-serif;font-size:14.5px;line-height:23px;color:#111;letter-spacing:-0.1px;white-space:pre;overflow:hidden">END</div>
<div style="position:absolute;left:196px;top:198px;width:156px;height:22px;box-sizing:border-box;background:#cde4fa;padding-left:4px;text-align:left;font-family:'Liberation Sans', sans-serif;font-size:14.5px;line-height:23px;color:#111;letter-spacing:-0.1px;white-space:pre;overflow:hidden">Hyck Development C...</div>
<div style="position:absolute;left:354px;top:198px;width:156px;height:22px;box-sizing:border-box;background:#cde4fa;padding-left:4px;text-align:left;font-family:'Liberation Sans', sans-serif;font-size:14.5px;line-height:23px;color:#111;letter-spacing:-0.1px;white-space:pre;overflow:hidden">Balltown And Consau...</div>
<div style="position:absolute;left:512px;top:198px;width:138px;height:22px;box-sizing:border-box;background:#cde4fa;padding-left:4px;text-align:left;font-family:'Liberation Sans', sans-serif;font-size:14.5px;line-height:23px;color:#111;letter-spacing:-0.1px;white-space:pre;overflow:hidden">Schenectady</div>
<div style="position:absolute;left:-1px;top:220px;width:97px;height:22px;box-sizing:border-box;background:#74b7e3;padding-left:4px;text-align:left;font-family:'Liberation Sans', sans-serif;font-size:14.5px;line-height:23px;color:#111;letter-spacing:-0.1px;white-space:pre;overflow:hidden">41779</div>
<div style="position:absolute;left:98px;top:220px;width:96px;height:22px;box-sizing:border-box;background:#74b7e3;padding-left:4px;text-align:left;font-family:'Liberation Sans', sans-serif;font-size:14.5px;line-height:23px;color:#111;letter-spacing:-0.1px;white-space:pre;overflow:hidden">END</div>
<div style="position:absolute;left:196px;top:220px;width:156px;height:22px;box-sizing:border-box;background:#74b7e3;padding-left:4px;text-align:left;font-family:'Liberation Sans', sans-serif;font-size:14.5px;line-height:23px;color:#111;letter-spacing:-0.1px;white-space:pre;overflow:hidden">Business Communic...</div>
<div style="position:absolute;left:354px;top:220px;width:156px;height:22px;box-sizing:border-box;background:#74b7e3;padding-left:4px;text-align:left;font-family:'Liberation Sans', sans-serif;font-size:14.5px;line-height:23px;color:#111;letter-spacing:-0.1px;white-space:pre;overflow:hidden">34 Andrews Place</div>
<div style="position:absolute;left:512px;top:220px;width:138px;height:22px;box-sizing:border-box;background:#74b7e3;padding-left:4px;text-align:left;font-family:'Liberation Sans', sans-serif;font-size:14.5px;line-height:23px;color:#111;letter-spacing:-0.1px;white-space:pre;overflow:hidden">Statten Island</div>
<div style="position:absolute;left:-1px;top:242px;width:97px;height:22px;box-sizing:border-box;background:#cde4fa;padding-left:4px;text-align:left;font-family:'Liberation Sans', sans-serif;font-size:14.5px;line-height:23px;color:#111;letter-spacing:-0.1px;white-space:pre;overflow:hidden">41874</div>
<div style="position:absolute;left:98px;top:242px;width:96px;height:22px;box-sizing:border-box;background:#cde4fa;padding-left:4px;text-align:left;font-family:'Liberation Sans', sans-serif;font-size:14.5px;line-height:23px;color:#111;letter-spacing:-0.1px;white-space:pre;overflow:hidden">END</div>
<div style="position:absolute;left:196px;top:242px;width:156px;height:22px;box-sizing:border-box;background:#cde4fa;padding-left:4px;text-align:left;font-family:'Liberation Sans', sans-serif;font-size:14.5px;line-height:23px;color:#111;letter-spacing:-0.1px;white-space:pre;overflow:hidden">Perkin-Elmer</div>
<div style="position:absolute;left:354px;top:242px;width:156px;height:22px;box-sizing:border-box;background:#cde4fa;padding-left:4px;text-align:left;font-family:'Liberation Sans', sans-serif;font-size:14.5px;line-height:23px;color:#111;letter-spacing:-0.1px;white-space:pre;overflow:hidden">777 Main Avenue</div>
<div style="position:absolute;left:512px;top:242px;width:138px;height:22px;box-sizing:border-box;background:#cde4fa;padding-left:4px;text-align:left;font-family:'Liberation Sans', sans-serif;font-size:14.5px;line-height:23px;color:#111;letter-spacing:-0.1px;white-space:pre;overflow:hidden">Norwalk</div>
<div style="position:absolute;left:-1px;top:264px;width:97px;height:22px;box-sizing:border-box;background:#74b7e3;padding-left:4px;text-align:left;font-family:'Liberation Sans', sans-serif;font-size:14.5px;line-height:23px;color:#111;letter-spacing:-0.1px;white-space:pre;overflow:hidden">41083</div>
<div style="position:absolute;left:98px;top:264px;width:96px;height:22px;box-sizing:border-box;background:#74b7e3;padding-left:4px;text-align:left;font-family:'Liberation Sans', sans-serif;font-size:14.5px;line-height:23px;color:#111;letter-spacing:-0.1px;white-space:pre;overflow:hidden">End</div>
<div style="position:absolute;left:196px;top:264px;width:156px;height:22px;box-sizing:border-box;background:#74b7e3;padding-left:4px;text-align:left;font-family:'Liberation Sans', sans-serif;font-size:14.5px;line-height:23px;color:#111;letter-spacing:-0.1px;white-space:pre;overflow:hidden">Clinical Hematology, I...</div>
<div style="position:absolute;left:354px;top:264px;width:156px;height:22px;box-sizing:border-box;background:#74b7e3;padding-left:4px;text-align:left;font-family:'Liberation Sans', sans-serif;font-size:14.5px;line-height:23px;color:#111;letter-spacing:-0.1px;white-space:pre;overflow:hidden">42 S Douglas Avenu...</div>
<div style="position:absolute;left:512px;top:264px;width:138px;height:22px;box-sizing:border-box;background:#74b7e3;padding-left:4px;text-align:left;font-family:'Liberation Sans', sans-serif;font-size:14.5px;line-height:23px;color:#111;letter-spacing:-0.1px;white-space:pre;overflow:hidden">Oklahoma City</div>
<div style="position:absolute;left:-1px;top:286px;width:97px;height:22px;box-sizing:border-box;background:#cde4fa;padding-left:4px;text-align:left;font-family:'Liberation Sans', sans-serif;font-size:14.5px;line-height:23px;color:#111;letter-spacing:-0.1px;white-space:pre;overflow:hidden">41143</div>
<div style="position:absolute;left:98px;top:286px;width:96px;height:22px;box-sizing:border-box;background:#cde4fa;padding-left:4px;text-align:left;font-family:'Liberation Sans', sans-serif;font-size:14.5px;line-height:23px;color:#111;letter-spacing:-0.1px;white-space:pre;overflow:hidden"></div>
<div style="position:absolute;left:196px;top:286px;width:156px;height:22px;box-sizing:border-box;background:#cde4fa;padding-left:4px;text-align:left;font-family:'Liberation Sans', sans-serif;font-size:14.5px;line-height:23px;color:#111;letter-spacing:-0.1px;white-space:pre;overflow:hidden">Peak Publishing, Inc.</div>
<div style="position:absolute;left:354px;top:286px;width:156px;height:22px;box-sizing:border-box;background:#cde4fa;padding-left:4px;text-align:left;font-family:'Liberation Sans', sans-serif;font-size:14.5px;line-height:23px;color:#111;letter-spacing:-0.1px;white-space:pre;overflow:hidden">P.O. Box 2088</div>
<div style="position:absolute;left:512px;top:286px;width:138px;height:22px;box-sizing:border-box;background:#cde4fa;padding-left:4px;text-align:left;font-family:'Liberation Sans', sans-serif;font-size:14.5px;line-height:23px;color:#111;letter-spacing:-0.1px;white-space:pre;overflow:hidden">Kent</div>
<div style="position:absolute;left:-1px;top:308px;width:97px;height:22px;box-sizing:border-box;background:#74b7e3;padding-left:4px;text-align:left;font-family:'Liberation Sans', sans-serif;font-size:14.5px;line-height:23px;color:#111;letter-spacing:-0.1px;white-space:pre;overflow:hidden">41378</div>
<div style="position:absolute;left:98px;top:308px;width:96px;height:22px;box-sizing:border-box;background:#74b7e3;padding-left:4px;text-align:left;font-family:'Liberation Sans', sans-serif;font-size:14.5px;line-height:23px;color:#111;letter-spacing:-0.1px;white-space:pre;overflow:hidden">DLR</div>
<div style="position:absolute;left:196px;top:308px;width:156px;height:22px;box-sizing:border-box;background:#74b7e3;padding-left:4px;text-align:left;font-family:'Liberation Sans', sans-serif;font-size:14.5px;line-height:23px;color:#111;letter-spacing:-0.1px;white-space:pre;overflow:hidden">Programmer&#x27;s House</div>
<div style="position:absolute;left:354px;top:308px;width:156px;height:22px;box-sizing:border-box;background:#74b7e3;padding-left:4px;text-align:left;font-family:'Liberation Sans', sans-serif;font-size:14.5px;line-height:23px;color:#111;letter-spacing:-0.1px;white-space:pre;overflow:hidden">883 N Hyden, #195</div>
<div style="position:absolute;left:512px;top:308px;width:138px;height:22px;box-sizing:border-box;background:#74b7e3;padding-left:4px;text-align:left;font-family:'Liberation Sans', sans-serif;font-size:14.5px;line-height:23px;color:#111;letter-spacing:-0.1px;white-space:pre;overflow:hidden">Scottsdale</div>
<div style="position:absolute;left:-1px;top:330px;width:97px;height:22px;box-sizing:border-box;background:#cde4fa;padding-left:4px;text-align:left;font-family:'Liberation Sans', sans-serif;font-size:14.5px;line-height:23px;color:#111;letter-spacing:-0.1px;white-space:pre;overflow:hidden">41500</div>
<div style="position:absolute;left:98px;top:330px;width:96px;height:22px;box-sizing:border-box;background:#cde4fa;padding-left:4px;text-align:left;font-family:'Liberation Sans', sans-serif;font-size:14.5px;line-height:23px;color:#111;letter-spacing:-0.1px;white-space:pre;overflow:hidden">END</div>
<div style="position:absolute;left:196px;top:330px;width:156px;height:22px;box-sizing:border-box;background:#cde4fa;padding-left:4px;text-align:left;font-family:'Liberation Sans', sans-serif;font-size:14.5px;line-height:23px;color:#111;letter-spacing:-0.1px;white-space:pre;overflow:hidden">Something</div>
<div style="position:absolute;left:354px;top:330px;width:156px;height:22px;box-sizing:border-box;background:#cde4fa;padding-left:4px;text-align:left;font-family:'Liberation Sans', sans-serif;font-size:14.5px;line-height:23px;color:#111;letter-spacing:-0.1px;white-space:pre;overflow:hidden">Some street</div>
<div style="position:absolute;left:512px;top:330px;width:138px;height:22px;box-sizing:border-box;background:#cde4fa;padding-left:4px;text-align:left;font-family:'Liberation Sans', sans-serif;font-size:14.5px;line-height:23px;color:#111;letter-spacing:-0.1px;white-space:pre;overflow:hidden">City</div>
</div>
<div style="position:absolute;left:395px;top:164px;width:2px;height:352px;background:#5f6a75"></div>
<div style="position:absolute;left:493px;top:164px;width:2px;height:352px;background:#5f6a75"></div>
<div style="position:absolute;left:651px;top:164px;width:2px;height:352px;background:#5f6a75"></div>
<div style="position:absolute;left:809px;top:164px;width:2px;height:352px;background:#5f6a75"></div>
<div style="position:absolute;left:299px;top:164px;width:96px;height:1px;background:#9a9a9a"></div>
<div style="position:absolute;left:299px;top:164px;width:1px;height:22px;background:#9a9a9a"></div>
<div style="position:absolute;left:949px;top:140px;width:12px;height:376px;background:#c8c8c8"></div>
<div style="position:absolute;left:959px;top:140px;width:2px;height:376px;background:#7a7a7a"></div>
<div style="position:absolute;left:949px;top:142px;width:10px;height:16px;background:#f4f4f4;border-bottom:2px solid #808080;box-sizing:border-box"></div>
<svg style="position:absolute;left:951px;top:147px" width="7" height="4" viewBox="0 0 7 4"><path d="M0 4 L3.5 0 L7 4 Z" fill="#000"/></svg>
<div style="position:absolute;left:949px;top:158px;width:10px;height:187px;background:#f4f4f4;border-bottom:2px solid #808080;box-sizing:border-box"></div>
<div style="position:absolute;left:1002px;top:112px;width:570px;height:773px;box-sizing:border-box;border:1px solid #2c333a;border-radius:6px 6px 0 0;background:#d6e4f0;overflow:hidden">
<div style="position:absolute;left:0;top:0;right:0;height:31px;background:linear-gradient(to bottom,#e0e8f3 0px,#e0e8f3 1px,#c2cbd9 1px,#c6d3e2 14px,#d2e0ee 27px,#d6e0ea 29px,#e8f0f8 30px)"></div>
<div style="position:absolute;left:0;top:0;width:1px;bottom:0;background:rgba(255,255,255,0.7)"></div>
<div style="position:absolute;left:7px;top:30px;right:7px;bottom:8px;background:#f0f0f0;box-sizing:border-box;border:1px solid #e9f1f9;border-top:1px solid #e6eef8"></div>
</div>
<svg style="position:absolute;left:1014px;top:123px" width="13" height="16" viewBox="0 0 13 16"><path d="M1.5 2.5 L2.5 1.5 L10.5 1.5 L11.5 2.5 L11.5 13.5 L10.5 14.5 L2.5 14.5 L1.5 13.5 Z" fill="#7fbfc3" stroke="#0f2628" stroke-width="1.3"/><rect x="3" y="0" width="7" height="1.5" fill="#0f2628"/><rect x="3" y="14.5" width="7" height="1.5" fill="#0f2628"/><path d="M3 3.5 L10 3.5" stroke="#a9dadc" stroke-width="1"/><path d="M6.5 4 L6.5 13" stroke="#9fd2d4" stroke-width="1.2"/></svg>
<div style="position:absolute;left:1032px;top:125px;white-space:pre;font-family:'Liberation Sans', sans-serif;font-size:12px;line-height:15px;color:#96a1ad;letter-spacing:-0.27px">INVOICE - Browsing SQL Statement</div>
<div style="position:absolute;left:1462px;top:122px;width:32px;height:18px;box-sizing:border-box;border:1px solid #8592a4;border-radius:3px;background:linear-gradient(to bottom,#d9e3ef 0%,#d3dde9 50%,#c9d5e3 100%);box-shadow:inset 0 0 0 1px rgba(255,255,255,0.35)"></div>
<div style="position:absolute;left:1472px;top:130px;width:9px;height:2px;box-sizing:content-box;background:#fff;border:1px solid #5f6b7a;border-radius:1px"></div>
<div style="position:absolute;left:1496px;top:122px;width:32px;height:18px;box-sizing:border-box;border:1px solid #8592a4;border-radius:3px;background:linear-gradient(to bottom,#d9e3ef 0%,#d3dde9 50%,#c9d5e3 100%);box-shadow:inset 0 0 0 1px rgba(255,255,255,0.35)"></div>
<div style="position:absolute;left:1507px;top:126px;width:8px;height:6px;box-sizing:content-box;border:1px solid #5f6b7a;background:#fff;border-radius:1px"><div style="position:absolute;left:2px;top:2px;width:2px;height:1px;border:1px solid #5f6b7a;background:#cdd8e4"></div></div>
<div style="position:absolute;left:1530px;top:122px;width:32px;height:18px;box-sizing:border-box;border:1px solid #8592a4;border-radius:3px;background:linear-gradient(to bottom,#d9e3ef 0%,#d3dde9 50%,#c9d5e3 100%);box-shadow:inset 0 0 0 1px rgba(255,255,255,0.35)"></div>
<svg style="position:absolute;left:1540px;top:126px" width="11" height="9" viewBox="0 0 11 9"><path d="M2 1.5 L9 7.5 M9 1.5 L2 7.5" stroke="#5f6b7a" stroke-width="4" stroke-linecap="round"/><path d="M2 1.5 L9 7.5 M9 1.5 L2 7.5" stroke="#fff" stroke-width="2.2" stroke-linecap="round"/></svg>
<div style="position:absolute;left:1020px;top:163px;width:56px;height:20px;box-sizing:border-box;background:#f0f0f0;border-top:1px solid #fff;border-left:1px solid #fff;border-right:1px solid #696969;border-bottom:1px solid #696969;box-shadow:inset -1px -1px 0 #a0a0a0"></div>
<div style="position:absolute;left:1020px;top:165px;width:56px;text-align:center;font-family:'Liberation Sans', sans-serif;font-size:11px;line-height:14px;color:#000;letter-spacing:-0.2px;white-space:pre">Print</div>
<div style="position:absolute;left:1086px;top:163px;width:63px;height:20px;box-sizing:border-box;background:#f0f0f0;border-top:1px solid #fff;border-left:1px solid #fff;border-right:1px solid #696969;border-bottom:1px solid #696969;box-shadow:inset -1px -1px 0 #a0a0a0"></div>
<div style="position:absolute;left:1086px;top:165px;width:63px;text-align:center;font-family:'Liberation Sans', sans-serif;font-size:11px;line-height:14px;color:#000;letter-spacing:-0.2px;white-space:pre">Export</div>
<div style="position:absolute;left:1159px;top:163px;width:63px;height:20px;box-sizing:border-box;background:#f0f0f0;border-top:1px solid #fff;border-left:1px solid #fff;border-right:1px solid #696969;border-bottom:1px solid #696969;box-shadow:inset -1px -1px 0 #a0a0a0"></div>
<div style="position:absolute;left:1159px;top:165px;width:63px;text-align:center;font-family:'Liberation Sans', sans-serif;font-size:11px;line-height:14px;color:#000;letter-spacing:-0.2px;white-space:pre">Collapse</div>
<div style="position:absolute;left:1232px;top:163px;width:42px;height:20px;box-sizing:border-box;background:#f0f0f0;border-top:1px solid #fff;border-left:1px solid #fff;border-right:1px solid #696969;border-bottom:1px solid #696969;box-shadow:inset -1px -1px 0 #a0a0a0"></div>
<div style="position:absolute;left:1232px;top:165px;width:42px;text-align:center;font-family:'Liberation Sans', sans-serif;font-size:11px;line-height:14px;color:#a0a0a0;letter-spacing:-0.2px;white-space:pre">Link</div>
<div style="position:absolute;left:1289px;top:154px;white-space:pre;font-family:'Liberation Sans', sans-serif;font-size:11px;line-height:13px;color:#000;letter-spacing:-0.12px">Left</div>
<div style="position:absolute;left:1289px;top:167px;white-space:pre;font-family:'Liberation Sans', sans-serif;font-size:11px;line-height:13px;color:#000;letter-spacing:-0.12px">click</div>
<div style="position:absolute;left:1289px;top:180px;white-space:pre;font-family:'Liberation Sans', sans-serif;font-size:11px;line-height:13px;color:#000;letter-spacing:-0.12px">header</div>
<div style="position:absolute;left:1357px;top:163px;white-space:pre;font-family:'Liberation Mono', monospace;font-weight:bold;font-size:11px;transform:scaleY(1.12);transform-origin:0 0;line-height:14px;color:#2828d0">Rows :</div>
<div style="position:absolute;left:1414px;top:160px;white-space:pre;font-family:'Liberation Mono', monospace;font-size:18px;line-height:21px;color:#111;letter-spacing:-0.6px">275</div>
<div style="position:absolute;left:1020px;top:182px;width:521px;height:24px;background:#7a7680"></div>
<div style="position:absolute;left:1021px;top:185px;width:156px;height:19px;background:#0000f2;box-sizing:border-box;border-top:1px solid #d8d0f8;border-left:1px solid #e0d8f8;border-right:1px solid #4838a0;border-bottom:1px solid #9080d0;overflow:hidden"><div style="position:absolute;left:3px;top:1px;width:133px;height:14px;background:#00807a;border-radius:6px;text-align:center;font-family:'Liberation Mono', monospace;font-weight:normal;font-size:12px;line-height:14px;color:#d2fbf4;-webkit-text-stroke:0.2px #d2fbf4">INV_NMBR</div></div>
<div style="position:absolute;left:1179px;top:185px;width:141px;height:19px;background:#0000f2;box-sizing:border-box;border-top:1px solid #d8d0f8;border-left:1px solid #e0d8f8;border-right:1px solid #4838a0;border-bottom:1px solid #9080d0;overflow:hidden"><div style="position:absolute;left:3px;top:1px;width:118px;height:14px;background:#00807a;border-radius:6px;text-align:center;font-family:'Liberation Mono', monospace;font-weight:normal;font-size:12px;line-height:14px;color:#d2fbf4;-webkit-text-stroke:0.2px #d2fbf4">BALANCE</div></div>
<div style="position:absolute;left:1322px;top:185px;width:156px;height:19px;background:#0000f2;box-sizing:border-box;border-top:1px solid #d8d0f8;border-left:1px solid #e0d8f8;border-right:1px solid #4838a0;border-bottom:1px solid #9080d0;overflow:hidden"><div style="position:absolute;left:3px;top:1px;width:133px;height:14px;background:#00807a;border-radius:6px;text-align:center;font-family:'Liberation Mono', monospace;font-weight:normal;font-size:12px;line-height:14px;color:#d2fbf4;-webkit-text-stroke:0.2px #d2fbf4">CUST_NAME</div></div>
<div style="position:absolute;left:1480px;top:185px;width:61px;height:19px;background:#0000f2;box-sizing:border-box;border-top:1px solid #d8d0f8;border-left:1px solid #e0d8f8;border-right:1px solid #4838a0;border-bottom:1px solid #9080d0;overflow:hidden"><div style="position:absolute;left:3px;top:1px;width:133px;height:14px;background:#00807a;border-radius:6px;text-align:center;font-family:'Liberation Mono', monospace;font-weight:normal;font-size:12px;line-height:14px;color:#d2fbf4;-webkit-text-stroke:0.2px #d2fbf4">PO_NMBR</div></div>
<div style="position:absolute;left:1020px;top:206px;width:1px;height:428px;background:#6a7078"></div>
<div style="position:absolute;left:1021px;top:206px;width:520px;height:390px;overflow:hidden">
<div style="position:absolute;left:-1px;top:0px;width:157px;height:22px;box-sizing:border-box;background:#fff;padding-left:4px;text-align:left;font-family:'Liberation Sans', sans-serif;font-size:14.5px;line-height:23px;color:#111;letter-spacing:-0.1px;white-space:pre;overflow:hidden">13336</div>
<div style="position:absolute;left:158px;top:0px;width:141px;height:22px;box-sizing:border-box;background:#74b7e3;padding-right:3px;text-align:right;font-family:'Liberation Sans', sans-serif;font-size:14.5px;line-height:23px;color:#111;letter-spacing:-0.1px;white-space:pre;overflow:hidden">40.00</div>
<div style="position:absolute;left:301px;top:0px;width:156px;height:22px;box-sizing:border-box;background:#74b7e3;padding-left:4px;text-align:left;font-family:'Liberation Sans', sans-serif;font-size:14.5px;line-height:23px;color:#111;letter-spacing:-0.1px;white-space:pre;overflow:hidden">Fremax Company BV</div>
<div style="position:absolute;left:459px;top:0px;width:61px;height:22px;box-sizing:border-box;background:#74b7e3;padding-left:4px;text-align:left;font-family:'Liberation Sans', sans-serif;font-size:14.5px;line-height:23px;color:#111;letter-spacing:-0.1px;white-space:pre;overflow:hidden"></div>
<div style="position:absolute;left:-1px;top:22px;width:157px;height:22px;box-sizing:border-box;background:#cde4fa;padding-left:4px;text-align:left;font-family:'Liberation Sans', sans-serif;font-size:14.5px;line-height:23px;color:#111;letter-spacing:-0.1px;white-space:pre;overflow:hidden">13962</div>
<div style="position:absolute;left:158px;top:22px;width:141px;height:22px;box-sizing:border-box;background:#cde4fa;padding-right:3px;text-align:right;font-family:'Liberation Sans', sans-serif;font-size:14.5px;line-height:23px;color:#111;letter-spacing:-0.1px;white-space:pre;overflow:hidden">-149.95</div>
<div style="position:absolute;left:301px;top:22px;width:156px;height:22px;box-sizing:border-box;background:#cde4fa;padding-left:4px;text-align:left;font-family:'Liberation Sans', sans-serif;font-size:14.5px;line-height:23px;color:#111;letter-spacing:-0.1px;white-space:pre;overflow:hidden">Programmer&#x27;s House</div>
<div style="position:absolute;left:459px;top:22px;width:61px;height:22px;box-sizing:border-box;background:#cde4fa;padding-left:4px;text-align:left;font-family:'Liberation Sans', sans-serif;font-size:14.5px;line-height:23px;color:#111;letter-spacing:-0.1px;white-space:pre;overflow:hidden">894405</div>
<div style="position:absolute;left:-1px;top:44px;width:157px;height:22px;box-sizing:border-box;background:#74b7e3;padding-left:4px;text-align:left;font-family:'Liberation Sans', sans-serif;font-size:14.5px;line-height:23px;color:#111;letter-spacing:-0.1px;white-space:pre;overflow:hidden">14102</div>
<div style="position:absolute;left:158px;top:44px;width:141px;height:22px;box-sizing:border-box;background:#74b7e3;padding-right:3px;text-align:right;font-family:'Liberation Sans', sans-serif;font-size:14.5px;line-height:23px;color:#111;letter-spacing:-0.1px;white-space:pre;overflow:hidden">-276.00</div>
<div style="position:absolute;left:301px;top:44px;width:156px;height:22px;box-sizing:border-box;background:#74b7e3;padding-left:4px;text-align:left;font-family:'Liberation Sans', sans-serif;font-size:14.5px;line-height:23px;color:#111;letter-spacing:-0.1px;white-space:pre;overflow:hidden">Peak Publishing, Inc.</div>
<div style="position:absolute;left:459px;top:44px;width:61px;height:22px;box-sizing:border-box;background:#74b7e3;padding-left:4px;text-align:left;font-family:'Liberation Sans', sans-serif;font-size:14.5px;line-height:23px;color:#111;letter-spacing:-0.1px;white-space:pre;overflow:hidden"></div>
<div style="position:absolute;left:-1px;top:66px;width:157px;height:22px;box-sizing:border-box;background:#cde4fa;padding-left:4px;text-align:left;font-family:'Liberation Sans', sans-serif;font-size:14.5px;line-height:23px;color:#111;letter-spacing:-0.1px;white-space:pre;overflow:hidden">14510</div>
<div style="position:absolute;left:158px;top:66px;width:141px;height:22px;box-sizing:border-box;background:#cde4fa;padding-right:3px;text-align:right;font-family:'Liberation Sans', sans-serif;font-size:14.5px;line-height:23px;color:#111;letter-spacing:-0.1px;white-space:pre;overflow:hidden">0.00</div>
<div style="position:absolute;left:301px;top:66px;width:156px;height:22px;box-sizing:border-box;background:#cde4fa;padding-left:4px;text-align:left;font-family:'Liberation Sans', sans-serif;font-size:14.5px;line-height:23px;color:#111;letter-spacing:-0.1px;white-space:pre;overflow:hidden">Programmer&#x27;s Bible</div>
<div style="position:absolute;left:459px;top:66px;width:61px;height:22px;box-sizing:border-box;background:#cde4fa;padding-left:4px;text-align:left;font-family:'Liberation Sans', sans-serif;font-size:14.5px;line-height:23px;color:#111;letter-spacing:-0.1px;white-space:pre;overflow:hidden">47578</div>
<div style="position:absolute;left:-1px;top:88px;width:157px;height:22px;box-sizing:border-box;background:#74b7e3;padding-left:4px;text-align:left;font-family:'Liberation Sans', sans-serif;font-size:14.5px;line-height:23px;color:#111;letter-spacing:-0.1px;white-space:pre;overflow:hidden">14676</div>
<div style="position:absolute;left:158px;top:88px;width:141px;height:22px;box-sizing:border-box;background:#74b7e3;padding-right:3px;text-align:right;font-family:'Liberation Sans', sans-serif;font-size:14.5px;line-height:23px;color:#111;letter-spacing:-0.1px;white-space:pre;overflow:hidden">0.00</div>
<div style="position:absolute;left:301px;top:88px;width:156px;height:22px;box-sizing:border-box;background:#74b7e3;padding-left:4px;text-align:left;font-family:'Liberation Sans', sans-serif;font-size:14.5px;line-height:23px;color:#111;letter-spacing:-0.1px;white-space:pre;overflow:hidden">Programmer&#x27;s Bible</div>
<div style="position:absolute;left:459px;top:88px;width:61px;height:22px;box-sizing:border-box;background:#74b7e3;padding-left:4px;text-align:left;font-family:'Liberation Sans', sans-serif;font-size:14.5px;line-height:23px;color:#111;letter-spacing:-0.1px;white-space:pre;overflow:hidden">48138</div>
<div style="position:absolute;left:-1px;top:110px;width:157px;height:22px;box-sizing:border-box;background:#cde4fa;padding-left:4px;text-align:left;font-family:'Liberation Sans', sans-serif;font-size:14.5px;line-height:23px;color:#111;letter-spacing:-0.1px;white-space:pre;overflow:hidden">14710</div>
<div style="position:absolute;left:158px;top:110px;width:141px;height:22px;box-sizing:border-box;background:#cde4fa;padding-right:3px;text-align:right;font-family:'Liberation Sans', sans-serif;font-size:14.5px;line-height:23px;color:#111;letter-spacing:-0.1px;white-space:pre;overflow:hidden">0.00</div>
<div style="position:absolute;left:301px;top:110px;width:156px;height:22px;box-sizing:border-box;background:#cde4fa;padding-left:4px;text-align:left;font-family:'Liberation Sans', sans-serif;font-size:14.5px;line-height:23px;color:#111;letter-spacing:-0.1px;white-space:pre;overflow:hidden">Programmer&#x27;s Bible</div>
<div style="position:absolute;left:459px;top:110px;width:61px;height:22px;box-sizing:border-box;background:#cde4fa;padding-left:4px;text-align:left;font-family:'Liberation Sans', sans-serif;font-size:14.5px;line-height:23px;color:#111;letter-spacing:-0.1px;white-space:pre;overflow:hidden">48611</div>
<div style="position:absolute;left:-1px;top:132px;width:157px;height:22px;box-sizing:border-box;background:#74b7e3;padding-left:4px;text-align:left;font-family:'Liberation Sans', sans-serif;font-size:14.5px;line-height:23px;color:#111;letter-spacing:-0.1px;white-space:pre;overflow:hidden">14953</div>
<div style="position:absolute;left:158px;top:132px;width:141px;height:22px;box-sizing:border-box;background:#74b7e3;padding-right:3px;text-align:right;font-family:'Liberation Sans', sans-serif;font-size:14.5px;line-height:23px;color:#111;letter-spacing:-0.1px;white-space:pre;overflow:hidden">-149.95</div>
<div style="position:absolute;left:301px;top:132px;width:156px;height:22px;box-sizing:border-box;background:#74b7e3;padding-left:4px;text-align:left;font-family:'Liberation Sans', sans-serif;font-size:14.5px;line-height:23px;color:#111;letter-spacing:-0.1px;white-space:pre;overflow:hidden">Programmer&#x27;s Bible</div>
<div style="position:absolute;left:459px;top:132px;width:61px;height:22px;box-sizing:border-box;background:#74b7e3;padding-left:4px;text-align:left;font-family:'Liberation Sans', sans-serif;font-size:14.5px;line-height:23px;color:#111;letter-spacing:-0.1px;white-space:pre;overflow:hidden">R51434</div>
<div style="position:absolute;left:-1px;top:154px;width:157px;height:22px;box-sizing:border-box;background:#cde4fa;padding-left:4px;text-align:left;font-family:'Liberation Sans', sans-serif;font-size:14.5px;line-height:23px;color:#111;letter-spacing:-0.1px;white-space:pre;overflow:hidden">14957</div>
<div style="position:absolute;left:158px;top:154px;width:141px;height:22px;box-sizing:border-box;background:#cde4fa;padding-right:3px;text-align:right;font-family:'Liberation Sans', sans-serif;font-size:14.5px;line-height:23px;color:#111;letter-spacing:-0.1px;white-space:pre;overflow:hidden">-149.95</div>
<div style="position:absolute;left:301px;top:154px;width:156px;height:22px;box-sizing:border-box;background:#cde4fa;padding-left:4px;text-align:left;font-family:'Liberation Sans', sans-serif;font-size:14.5px;line-height:23px;color:#111;letter-spacing:-0.1px;white-space:pre;overflow:hidden">Programmer&#x27;s House</div>
<div style="position:absolute;left:459px;top:154px;width:61px;height:22px;box-sizing:border-box;background:#cde4fa;padding-left:4px;text-align:left;font-family:'Liberation Sans', sans-serif;font-size:14.5px;line-height:23px;color:#111;letter-spacing:-0.1px;white-space:pre;overflow:hidden">895260</div>
<div style="position:absolute;left:-1px;top:176px;width:157px;height:22px;box-sizing:border-box;background:#74b7e3;padding-left:4px;text-align:left;font-family:'Liberation Sans', sans-serif;font-size:14.5px;line-height:23px;color:#111;letter-spacing:-0.1px;white-space:pre;overflow:hidden">15117</div>
<div style="position:absolute;left:158px;top:176px;width:141px;height:22px;box-sizing:border-box;background:#74b7e3;padding-right:3px;text-align:right;font-family:'Liberation Sans', sans-serif;font-size:14.5px;line-height:23px;color:#111;letter-spacing:-0.1px;white-space:pre;overflow:hidden">0.00</div>
<div style="position:absolute;left:301px;top:176px;width:156px;height:22px;box-sizing:border-box;background:#74b7e3;padding-left:4px;text-align:left;font-family:'Liberation Sans', sans-serif;font-size:14.5px;line-height:23px;color:#111;letter-spacing:-0.1px;white-space:pre;overflow:hidden">Programmer&#x27;s Bible</div>
<div style="position:absolute;left:459px;top:176px;width:61px;height:22px;box-sizing:border-box;background:#74b7e3;padding-left:4px;text-align:left;font-family:'Liberation Sans', sans-serif;font-size:14.5px;line-height:23px;color:#111;letter-spacing:-0.1px;white-space:pre;overflow:hidden">53340</div>
<div style="position:absolute;left:-1px;top:198px;width:157px;height:22px;box-sizing:border-box;background:#cde4fa;padding-left:4px;text-align:left;font-family:'Liberation Sans', sans-serif;font-size:14.5px;line-height:23px;color:#111;letter-spacing:-0.1px;white-space:pre;overflow:hidden">11515</div>
<div style="position:absolute;left:158px;top:198px;width:141px;height:22px;box-sizing:border-box;background:#cde4fa;padding-right:3px;text-align:right;font-family:'Liberation Sans', sans-serif;font-size:14.5px;line-height:23px;color:#111;letter-spacing:-0.1px;white-space:pre;overflow:hidden">0.00</div>
<div style="position:absolute;left:301px;top:198px;width:156px;height:22px;box-sizing:border-box;background:#cde4fa;padding-left:4px;text-align:left;font-family:'Liberation Sans', sans-serif;font-size:14.5px;line-height:23px;color:#111;letter-spacing:-0.1px;white-space:pre;overflow:hidden">Programmer&#x27;s Bible</div>
<div style="position:absolute;left:459px;top:198px;width:61px;height:22px;box-sizing:border-box;background:#cde4fa;padding-left:4px;text-align:left;font-family:'Liberation Sans', sans-serif;font-size:14.5px;line-height:23px;color:#111;letter-spacing:-0.1px;white-space:pre;overflow:hidden">54778</div>
<div style="position:absolute;left:-1px;top:220px;width:157px;height:22px;box-sizing:border-box;background:#74b7e3;padding-left:4px;text-align:left;font-family:'Liberation Sans', sans-serif;font-size:14.5px;line-height:23px;color:#111;letter-spacing:-0.1px;white-space:pre;overflow:hidden">15164</div>
<div style="position:absolute;left:158px;top:220px;width:141px;height:22px;box-sizing:border-box;background:#74b7e3;padding-right:3px;text-align:right;font-family:'Liberation Sans', sans-serif;font-size:14.5px;line-height:23px;color:#111;letter-spacing:-0.1px;white-space:pre;overflow:hidden">0.00</div>
<div style="position:absolute;left:301px;top:220px;width:156px;height:22px;box-sizing:border-box;background:#74b7e3;padding-left:4px;text-align:left;font-family:'Liberation Sans', sans-serif;font-size:14.5px;line-height:23px;color:#111;letter-spacing:-0.1px;white-space:pre;overflow:hidden">Rapid Corporation</div>
<div style="position:absolute;left:459px;top:220px;width:61px;height:22px;box-sizing:border-box;background:#74b7e3;padding-left:4px;text-align:left;font-family:'Liberation Sans', sans-serif;font-size:14.5px;line-height:23px;color:#111;letter-spacing:-0.1px;white-space:pre;overflow:hidden">517404</div>
<div style="position:absolute;left:-1px;top:242px;width:157px;height:22px;box-sizing:border-box;background:#cde4fa;padding-left:4px;text-align:left;font-family:'Liberation Sans', sans-serif;font-size:14.5px;line-height:23px;color:#111;letter-spacing:-0.1px;white-space:pre;overflow:hidden">15174</div>
<div style="position:absolute;left:158px;top:242px;width:141px;height:22px;box-sizing:border-box;background:#cde4fa;padding-right:3px;text-align:right;font-family:'Liberation Sans', sans-serif;font-size:14.5px;line-height:23px;color:#111;letter-spacing:-0.1px;white-space:pre;overflow:hidden">0.00</div>
<div style="position:absolute;left:301px;top:242px;width:156px;height:22px;box-sizing:border-box;background:#cde4fa;padding-left:4px;text-align:left;font-family:'Liberation Sans', sans-serif;font-size:14.5px;line-height:23px;color:#111;letter-spacing:-0.1px;white-space:pre;overflow:hidden">Peak Publishing, Inc.</div>
<div style="position:absolute;left:459px;top:242px;width:61px;height:22px;box-sizing:border-box;background:#cde4fa;padding-left:4px;text-align:left;font-family:'Liberation Sans', sans-serif;font-size:14.5px;line-height:23px;color:#111;letter-spacing:-0.1px;white-space:pre;overflow:hidden">E.HECTOR</div>
<div style="position:absolute;left:-1px;top:264px;width:157px;height:22px;box-sizing:border-box;background:#74b7e3;padding-left:4px;text-align:left;font-family:'Liberation Sans', sans-serif;font-size:14.5px;line-height:23px;color:#111;letter-spacing:-0.1px;white-space:pre;overflow:hidden">15189</div>
<div style="position:absolute;left:158px;top:264px;width:141px;height:22px;box-sizing:border-box;background:#74b7e3;padding-right:3px;text-align:right;font-family:'Liberation Sans', sans-serif;font-size:14.5px;line-height:23px;color:#111;letter-spacing:-0.1px;white-space:pre;overflow:hidden">0.00</div>
<div style="position:absolute;left:301px;top:264px;width:156px;height:22px;box-sizing:border-box;background:#74b7e3;padding-left:4px;text-align:left;font-family:'Liberation Sans', sans-serif;font-size:14.5px;line-height:23px;color:#111;letter-spacing:-0.1px;white-space:pre;overflow:hidden">Foghead Discount S...</div>
<div style="position:absolute;left:459px;top:264px;width:61px;height:22px;box-sizing:border-box;background:#74b7e3;padding-left:4px;text-align:left;font-family:'Liberation Sans', sans-serif;font-size:14.5px;line-height:23px;color:#111;letter-spacing:-0.1px;white-space:pre;overflow:hidden">X14578JA</div>
<div style="position:absolute;left:-1px;top:286px;width:157px;height:22px;box-sizing:border-box;background:#cde4fa;padding-left:4px;text-align:left;font-family:'Liberation Sans', sans-serif;font-size:14.5px;line-height:23px;color:#111;letter-spacing:-0.1px;white-space:pre;overflow:hidden">15200</div>
<div style="position:absolute;left:158px;top:286px;width:141px;height:22px;box-sizing:border-box;background:#cde4fa;padding-right:3px;text-align:right;font-family:'Liberation Sans', sans-serif;font-size:14.5px;line-height:23px;color:#111;letter-spacing:-0.1px;white-space:pre;overflow:hidden">0.00</div>
<div style="position:absolute;left:301px;top:286px;width:156px;height:22px;box-sizing:border-box;background:#cde4fa;padding-left:4px;text-align:left;font-family:'Liberation Sans', sans-serif;font-size:14.5px;line-height:23px;color:#111;letter-spacing:-0.1px;white-space:pre;overflow:hidden">Peak Publishing, Inc.</div>
<div style="position:absolute;left:459px;top:286px;width:61px;height:22px;box-sizing:border-box;background:#cde4fa;padding-left:4px;text-align:left;font-family:'Liberation Sans', sans-serif;font-size:14.5px;line-height:23px;color:#111;letter-spacing:-0.1px;white-space:pre;overflow:hidden"></div>
<div style="position:absolute;left:-1px;top:308px;width:157px;height:22px;box-sizing:border-box;background:#74b7e3;padding-left:4px;text-align:left;font-family:'Liberation Sans', sans-serif;font-size:14.5px;line-height:23px;color:#111;letter-spacing:-0.1px;white-space:pre;overflow:hidden">15204</div>
<div style="position:absolute;left:158px;top:308px;width:141px;height:22px;box-sizing:border-box;background:#74b7e3;padding-right:3px;text-align:right;font-family:'Liberation Sans', sans-serif;font-size:14.5px;line-height:23px;color:#111;letter-spacing:-0.1px;white-space:pre;overflow:hidden">0.00</div>
<div style="position:absolute;left:301px;top:308px;width:156px;height:22px;box-sizing:border-box;background:#74b7e3;padding-left:4px;text-align:left;font-family:'Liberation Sans', sans-serif;font-size:14.5px;line-height:23px;color:#111;letter-spacing:-0.1px;white-space:pre;overflow:hidden">Foghead Discount S...</div>
<div style="position:absolute;left:459px;top:308px;width:61px;height:22px;box-sizing:border-box;background:#74b7e3;padding-left:4px;text-align:left;font-family:'Liberation Sans', sans-serif;font-size:14.5px;line-height:23px;color:#111;letter-spacing:-0.1px;white-space:pre;overflow:hidden">X14673JA</div>
<div style="position:absolute;left:-1px;top:330px;width:157px;height:22px;box-sizing:border-box;background:#cde4fa;padding-left:4px;text-align:left;font-family:'Liberation Sans', sans-serif;font-size:14.5px;line-height:23px;color:#111;letter-spacing:-0.1px;white-space:pre;overflow:hidden">15215</div>
<div style="position:absolute;left:158px;top:330px;width:141px;height:22px;box-sizing:border-box;background:#cde4fa;padding-right:3px;text-align:right;font-family:'Liberation Sans', sans-serif;font-size:14.5px;line-height:23px;color:#111;letter-spacing:-0.1px;white-space:pre;overflow:hidden">0.00</div>
<div style="position:absolute;left:301px;top:330px;width:156px;height:22px;box-sizing:border-box;background:#cde4fa;padding-left:4px;text-align:left;font-family:'Liberation Sans', sans-serif;font-size:14.5px;line-height:23px;color:#111;letter-spacing:-0.1px;white-space:pre;overflow:hidden">Programmer&#x27;s Bible</div>
<div style="position:absolute;left:459px;top:330px;width:61px;height:22px;box-sizing:border-box;background:#cde4fa;padding-left:4px;text-align:left;font-family:'Liberation Sans', sans-serif;font-size:14.5px;line-height:23px;color:#111;letter-spacing:-0.1px;white-space:pre;overflow:hidden">55554</div>
<div style="position:absolute;left:-1px;top:352px;width:157px;height:22px;box-sizing:border-box;background:#74b7e3;padding-left:4px;text-align:left;font-family:'Liberation Sans', sans-serif;font-size:14.5px;line-height:23px;color:#111;letter-spacing:-0.1px;white-space:pre;overflow:hidden">15223</div>
<div style="position:absolute;left:158px;top:352px;width:141px;height:22px;box-sizing:border-box;background:#74b7e3;padding-right:3px;text-align:right;font-family:'Liberation Sans', sans-serif;font-size:14.5px;line-height:23px;color:#111;letter-spacing:-0.1px;white-space:pre;overflow:hidden">0.00</div>
<div style="position:absolute;left:301px;top:352px;width:156px;height:22px;box-sizing:border-box;background:#74b7e3;padding-left:4px;text-align:left;font-family:'Liberation Sans', sans-serif;font-size:14.5px;line-height:23px;color:#111;letter-spacing:-0.1px;white-space:pre;overflow:hidden">Foghead Discount S...</div>
<div style="position:absolute;left:459px;top:352px;width:61px;height:22px;box-sizing:border-box;background:#74b7e3;padding-left:4px;text-align:left;font-family:'Liberation Sans', sans-serif;font-size:14.5px;line-height:23px;color:#111;letter-spacing:-0.1px;white-space:pre;overflow:hidden">X14850JA</div>
<div style="position:absolute;left:-1px;top:374px;width:157px;height:22px;box-sizing:border-box;background:#cde4fa;padding-left:4px;text-align:left;font-family:'Liberation Sans', sans-serif;font-size:14.5px;line-height:23px;color:#111;letter-spacing:-0.1px;white-space:pre;overflow:hidden">15227</div>
<div style="position:absolute;left:158px;top:374px;width:141px;height:22px;box-sizing:border-box;background:#cde4fa;padding-right:3px;text-align:right;font-family:'Liberation Sans', sans-serif;font-size:14.5px;line-height:23px;color:#111;letter-spacing:-0.1px;white-space:pre;overflow:hidden">0.00</div>
<div style="position:absolute;left:301px;top:374px;width:156px;height:22px;box-sizing:border-box;background:#cde4fa;padding-left:4px;text-align:left;font-family:'Liberation Sans', sans-serif;font-size:14.5px;line-height:23px;color:#111;letter-spacing:-0.1px;white-space:pre;overflow:hidden">Programmer&#x27;s House</div>
<div style="position:absolute;left:459px;top:374px;width:61px;height:22px;box-sizing:border-box;background:#cde4fa;padding-left:4px;text-align:left;font-family:'Liberation Sans', sans-serif;font-size:14.5px;line-height:23px;color:#111;letter-spacing:-0.1px;white-space:pre;overflow:hidden">895968</div>
</div>
<div style="position:absolute;left:1021px;top:596px;width:520px;height:38px;background:#fff"></div>
<div style="position:absolute;left:1021px;top:595px;width:520px;height:1px;background:#69737d"></div>
<div style="position:absolute;left:1177px;top:206px;width:2px;height:428px;background:#5f6a75"></div>
<div style="position:absolute;left:1320px;top:206px;width:2px;height:428px;background:#5f6a75"></div>
<div style="position:absolute;left:1478px;top:206px;width:2px;height:428px;background:#5f6a75"></div>
<div style="position:absolute;left:1021px;top:206px;width:156px;height:1px;background:#9a9a9a"></div>
<div style="position:absolute;left:1021px;top:206px;width:1px;height:22px;background:#9a9a9a"></div>
<div style="position:absolute;left:1541px;top:182px;width:12px;height:452px;background:#c8c8c8"></div>
<div style="position:absolute;left:1551px;top:182px;width:2px;height:452px;background:#7a7a7a"></div>
<div style="position:absolute;left:1541px;top:184px;width:10px;height:16px;background:#f4f4f4;border-bottom:2px solid #808080;box-sizing:border-box"></div>
<svg style="position:absolute;left:1543px;top:189px" width="7" height="4" viewBox="0 0 7 4"><path d="M0 4 L3.5 0 L7 4 Z" fill="#000"/></svg>
<div style="position:absolute;left:1541px;top:200px;width:10px;height:23px;background:#f4f4f4;border-bottom:2px solid #808080;box-sizing:border-box"></div>
<div style="position:absolute;left:1021px;top:634px;width:520px;height:12px;background:#c8c8c8"></div>
<div style="position:absolute;left:1021px;top:634px;width:16px;height:12px;background:#f4f4f4;border-right:2px solid #808080;border-bottom:2px solid #808080;box-sizing:border-box"></div>
<svg style="position:absolute;left:1026px;top:637px" width="4" height="7" viewBox="0 0 4 7"><path d="M4 0 L0 3.5 L4 7 Z" fill="#000"/></svg>
<div style="position:absolute;left:1037px;top:634px;width:108px;height:12px;background:#f4f4f4;border-right:2px solid #808080;border-bottom:2px solid #808080;box-sizing:border-box"></div>
<div style="position:absolute;left:1525px;top:634px;width:16px;height:12px;background:#f4f4f4;border-right:2px solid #808080;border-bottom:2px solid #808080;box-sizing:border-box"></div>
<svg style="position:absolute;left:1531px;top:637px" width="4" height="7" viewBox="0 0 4 7"><path d="M0 0 L4 3.5 L0 7 Z" fill="#000"/></svg>
<div style="position:absolute;left:1541px;top:634px;width:11px;height:12px;background:#f0f0f0"></div>
<div style="position:absolute;left:1541px;top:618px;width:10px;height:16px;background:#f4f4f4;border-bottom:2px solid #808080;box-sizing:border-box"></div>
<svg style="position:absolute;left:1543px;top:624px" width="7" height="4" viewBox="0 0 7 4"><path d="M0 0 L3.5 4 L7 0 Z" fill="#000"/></svg>
<div style="position:absolute;left:1020px;top:647px;white-space:pre;font-family:'Liberation Sans', sans-serif;font-size:11px;line-height:13px;color:#000;letter-spacing:-0.3px">Cell Contents:</div>
<div style="position:absolute;left:1020px;top:667px;width:532px;height:79px;box-sizing:border-box;background:#fff;border-top:2px solid #6d6d6d;border-left:2px solid #6d6d6d;border-bottom:1px solid #e3e3e3;border-right:1px solid #e3e3e3"></div>
<div style="position:absolute;left:1535px;top:669px;width:16px;height:76px;background:#f0f0f0"></div>
<svg style="position:absolute;left:1538px;top:674px" width="10" height="6" viewBox="0 0 10 6"><path d="M1 5 L5 1 L9 5" fill="none" stroke="#c0c0c0" stroke-width="1.5"/></svg>
<svg style="position:absolute;left:1538px;top:733px" width="10" height="6" viewBox="0 0 10 6"><path d="M1 1 L5 5 L9 1" fill="none" stroke="#c0c0c0" stroke-width="1.5"/></svg>
<div style="position:absolute;left:1023px;top:670px;white-space:pre;font-family:'Liberation Mono', monospace;font-size:13.33px;line-height:15px;color:#000">13336</div>
<div style="position:absolute;left:1020px;top:747px;white-space:pre;font-family:'Liberation Sans', sans-serif;font-size:11px;line-height:13px;color:#000;letter-spacing:-0.3px">SQL Statement:</div>
<div style="position:absolute;left:1020px;top:767px;width:427px;height:99px;box-sizing:border-box;background:#fff;border-top:2px solid #6d6d6d;border-left:2px solid #6d6d6d;border-bottom:1px solid #e3e3e3;border-right:1px solid #e3e3e3"></div>
<div style="position:absolute;left:1430px;top:769px;width:16px;height:96px;background:#f0f0f0"></div>
<svg style="position:absolute;left:1433px;top:774px" width="10" height="6" viewBox="0 0 10 6"><path d="M1 5 L5 1 L9 5" fill="none" stroke="#c0c0c0" stroke-width="1.5"/></svg>
<svg style="position:absolute;left:1433px;top:853px" width="10" height="6" viewBox="0 0 10 6"><path d="M1 1 L5 5 L9 1" fill="none" stroke="#c0c0c0" stroke-width="1.5"/></svg>
<div style="position:absolute;left:1023px;top:770px;white-space:pre;font-family:'Liberation Mono', monospace;font-size:13.33px;line-height:15px;color:#000">SELECT * from INVOICE</div>
<div style="position:absolute;left:1462px;top:767px;width:70px;height:21px;box-sizing:border-box;background:#f0f0f0;border-top:1px solid #fff;border-left:1px solid #fff;border-right:1px solid #696969;border-bottom:1px solid #696969;box-shadow:inset -1px -1px 0 #a0a0a0"></div>
<div style="position:absolute;left:1462px;top:771px;width:70px;text-align:center;font-family:'Liberation Sans', sans-serif;font-size:12px;line-height:14px;color:#000;letter-spacing:-0.2px;white-space:pre">Execute</div>
<div style="position:absolute;left:1462px;top:789px;width:70px;height:21px;box-sizing:border-box;background:#f0f0f0;border-top:1px solid #fff;border-left:1px solid #fff;border-right:1px solid #696969;border-bottom:1px solid #696969;box-shadow:inset -1px -1px 0 #a0a0a0"></div>
<div style="position:absolute;left:1462px;top:793px;width:70px;text-align:center;font-family:'Liberation Sans', sans-serif;font-size:12px;line-height:14px;color:#000;letter-spacing:-0.2px;white-space:pre">Reset</div>
<div style="position:absolute;left:1462px;top:811px;width:70px;height:21px;box-sizing:border-box;background:#f0f0f0;border-top:1px solid #fff;border-left:1px solid #fff;border-right:1px solid #696969;border-bottom:1px solid #696969;box-shadow:inset -1px -1px 0 #a0a0a0"></div>
<div style="position:absolute;left:1462px;top:815px;width:70px;text-align:center;font-family:'Liberation Sans', sans-serif;font-size:12px;line-height:14px;color:#000;letter-spacing:-0.2px;white-space:pre">Objects</div>
<div style="position:absolute;left:1462px;top:833px;width:70px;height:21px;box-sizing:border-box;background:#f0f0f0;border-top:1px solid #fff;border-left:1px solid #fff;border-right:1px solid #696969;border-bottom:1px solid #696969;box-shadow:inset -1px -1px 0 #a0a0a0"></div>
<div style="position:absolute;left:1462px;top:837px;width:70px;text-align:center;font-family:'Liberation Sans', sans-serif;font-size:12px;line-height:14px;color:#000;letter-spacing:-0.2px;white-space:pre">Save</div>
<div style="position:absolute;left:288px;top:497px;width:679px;height:381px;box-sizing:border-box;border:1px solid #2c333a;border-radius:6px 6px 0 0;background:#d6e4f0;overflow:hidden">
<div style="position:absolute;left:0;top:0;right:0;height:31px;background:linear-gradient(to bottom,#e0e8f3 0px,#e0e8f3 1px,#c2cbd9 1px,#c6d3e2 14px,#d2e0ee 27px,#d6e0ea 29px,#e8f0f8 30px)"></div>
<div style="position:absolute;left:0;top:0;width:1px;bottom:0;background:rgba(255,255,255,0.7)"></div>
<div style="position:absolute;left:7px;top:30px;right:7px;bottom:7px;background:#f0f0f0;box-sizing:border-box;border:1px solid #e9f1f9;border-top:1px solid #e6eef8"></div>
</div>
<svg style="position:absolute;left:300px;top:508px" width="13" height="16" viewBox="0 0 13 16"><path d="M1.5 2.5 L2.5 1.5 L10.5 1.5 L11.5 2.5 L11.5 13.5 L10.5 14.5 L2.5 14.5 L1.5 13.5 Z" fill="#7fbfc3" stroke="#0f2628" stroke-width="1.3"/><rect x="3" y="0" width="7" height="1.5" fill="#0f2628"/><rect x="3" y="14.5" width="7" height="1.5" fill="#0f2628"/><path d="M3 3.5 L10 3.5" stroke="#a9dadc" stroke-width="1"/><path d="M6.5 4 L6.5 13" stroke="#9fd2d4" stroke-width="1.2"/></svg>
<div style="position:absolute;left:318px;top:510px;white-space:pre;font-family:'Liberation Sans', sans-serif;font-size:12px;line-height:15px;color:#96a1ad;letter-spacing:-0.27px">Link this window</div>
<div style="position:absolute;left:925px;top:507px;width:32px;height:18px;box-sizing:border-box;border:1px solid #8592a4;border-radius:3px;background:linear-gradient(to bottom,#d9e3ef 0%,#d3dde9 50%,#c9d5e3 100%);box-shadow:inset 0 0 0 1px rgba(255,255,255,0.35)"></div>
<svg style="position:absolute;left:935px;top:511px" width="11" height="9" viewBox="0 0 11 9"><path d="M2 1.5 L9 7.5 M9 1.5 L2 7.5" stroke="#5f6b7a" stroke-width="4" stroke-linecap="round"/><path d="M2 1.5 L9 7.5 M9 1.5 L2 7.5" stroke="#fff" stroke-width="2.2" stroke-linecap="round"/></svg>
<div style="position:absolute;left:306px;top:540px;white-space:pre;font-family:'Liberation Mono', monospace;font-size:13.33px;line-height:13px;color:#000">Click on a Child Window to Link to this Parent Window</div>
<div style="position:absolute;left:306px;top:553px;white-space:pre;font-family:'Liberation Mono', monospace;font-size:13.33px;line-height:13px;color:#000">Then choose a field from each list to link.</div>
<div style="position:absolute;left:306px;top:598px;white-space:pre;font-family:'Liberation Mono', monospace;font-size:11.67px;line-height:14px;color:#000">Fields from Parent Window (CUSTOMER)</div>
<div style="position:absolute;left:642px;top:600px;white-space:pre;font-family:'Liberation Sans', sans-serif;font-size:11px;line-height:14px;color:#000;letter-spacing:-0.2px">Fields from Child Window <span style="font-family:'Liberation Mono', monospace;font-size:11.67px;letter-spacing:0">(INVOICE)</span></div>
<div style="position:absolute;left:306px;top:620px;width:290px;height:200px;background:#fff"></div>
<div style="position:absolute;left:306px;top:620px;width:290px;height:23px;background:#6e6e6e"></div>
<div style="position:absolute;left:307px;top:621px;width:167px;height:21px;background:#7f7f7f;box-sizing:border-box;border-top:1px solid #a8a8a8;border-left:1px solid #a8a8a8"></div>
<div style="position:absolute;left:475px;top:621px;width:41px;height:21px;background:#7f7f7f;box-sizing:border-box;border-top:1px solid #a8a8a8;border-left:1px solid #a8a8a8"></div>
<div style="position:absolute;left:517px;top:621px;width:39px;height:21px;background:#7f7f7f;box-sizing:border-box;border-top:1px solid #a8a8a8;border-left:1px solid #a8a8a8"></div>
<div style="position:absolute;left:557px;top:621px;width:39px;height:21px;background:#7f7f7f;box-sizing:border-box;border-top:1px solid #a8a8a8;border-left:1px solid #a8a8a8"></div>
<div style="position:absolute;left:311px;top:623px;white-space:pre;font-family:'Liberation Mono', monospace;font-size:13.33px;line-height:17px;color:#e8e8e8">Field Name</div>
<div style="position:absolute;left:479px;top:623px;white-space:pre;font-family:'Liberation Mono', monospace;font-size:13.33px;line-height:17px;color:#e8e8e8">Type</div>
<div style="position:absolute;left:517px;top:623px;width:34px;text-align:right;white-space:pre;font-family:'Liberation Mono', monospace;font-size:13.33px;line-height:17px;color:#e8e8e8">Len</div>
<div style="position:absolute;left:557px;top:623px;width:34px;text-align:right;white-space:pre;font-family:'Liberation Mono', monospace;font-size:13.33px;line-height:17px;color:#e8e8e8">Dec</div>
<div style="position:absolute;left:306px;top:643px;width:290px;height:176px;overflow:hidden">
<div style="position:absolute;left:1px;top:1px;width:167px;height:19px;box-sizing:border-box;background:#0000f2;padding-left:4px;text-align:left;white-space:pre;font-family:'Liberation Mono', monospace;font-size:13.33px;line-height:20px;color:#fff;border-bottom:1px solid #c4c4c4">CUST_NMBR</div>
<div style="position:absolute;left:169px;top:1px;width:41px;height:19px;box-sizing:border-box;background:#0000f2;padding-left:3px;text-align:left;white-space:pre;font-family:'Liberation Mono', monospace;font-size:13.33px;line-height:20px;color:#fff;border-bottom:1px solid #c4c4c4">C</div>
<div style="position:absolute;left:211px;top:1px;width:39px;height:19px;box-sizing:border-box;background:#0000f2;padding-right:5px;text-align:right;white-space:pre;font-family:'Liberation Mono', monospace;font-size:13.33px;line-height:20px;color:#fff;border-bottom:1px solid #c4c4c4">5</div>
<div style="position:absolute;left:251px;top:1px;width:39px;height:19px;box-sizing:border-box;background:#0000f2;padding-right:5px;text-align:right;white-space:pre;font-family:'Liberation Mono', monospace;font-size:13.33px;line-height:20px;color:#fff;border-bottom:1px solid #c4c4c4"><span style="font-family:'Liberation Sans';font-size:14px;position:relative;top:-1px">0</span></div>
<div style="position:absolute;left:1px;top:20px;width:167px;height:19px;box-sizing:border-box;background:#fff;padding-left:4px;text-align:left;white-space:pre;font-family:'Liberation Mono', monospace;font-size:13.33px;line-height:20px;color:#000;border-bottom:1px solid #c4c4c4">CUST_CODE</div>
<div style="position:absolute;left:169px;top:20px;width:41px;height:19px;box-sizing:border-box;background:#fff;padding-left:3px;text-align:left;white-space:pre;font-family:'Liberation Mono', monospace;font-size:13.33px;line-height:20px;color:#000;border-bottom:1px solid #c4c4c4">C</div>
<div style="position:absolute;left:211px;top:20px;width:39px;height:19px;box-sizing:border-box;background:#fff;padding-right:5px;text-align:right;white-space:pre;font-family:'Liberation Mono', monospace;font-size:13.33px;line-height:20px;color:#000;border-bottom:1px solid #c4c4c4">5</div>
<div style="position:absolute;left:251px;top:20px;width:39px;height:19px;box-sizing:border-box;background:#fff;padding-right:5px;text-align:right;white-space:pre;font-family:'Liberation Mono', monospace;font-size:13.33px;line-height:20px;color:#000;border-bottom:1px solid #c4c4c4"><span style="font-family:'Liberation Sans';font-size:14px;position:relative;top:-1px">0</span></div>
<div style="position:absolute;left:1px;top:39px;width:167px;height:19px;box-sizing:border-box;background:#fff;padding-left:4px;text-align:left;white-space:pre;font-family:'Liberation Mono', monospace;font-size:13.33px;line-height:20px;color:#000;border-bottom:1px solid #c4c4c4">BILL_NAME</div>
<div style="position:absolute;left:169px;top:39px;width:41px;height:19px;box-sizing:border-box;background:#fff;padding-left:3px;text-align:left;white-space:pre;font-family:'Liberation Mono', monospace;font-size:13.33px;line-height:20px;color:#000;border-bottom:1px solid #c4c4c4">C</div>
<div style="position:absolute;left:211px;top:39px;width:39px;height:19px;box-sizing:border-box;background:#fff;padding-right:5px;text-align:right;white-space:pre;font-family:'Liberation Mono', monospace;font-size:13.33px;line-height:20px;color:#000;border-bottom:1px solid #c4c4c4">35</div>
<div style="position:absolute;left:251px;top:39px;width:39px;height:19px;box-sizing:border-box;background:#fff;padding-right:5px;text-align:right;white-space:pre;font-family:'Liberation Mono', monospace;font-size:13.33px;line-height:20px;color:#000;border-bottom:1px solid #c4c4c4"><span style="font-family:'Liberation Sans';font-size:14px;position:relative;top:-1px">0</span></div>
<div style="position:absolute;left:1px;top:58px;width:167px;height:19px;box-sizing:border-box;background:#fff;padding-left:4px;text-align:left;white-space:pre;font-family:'Liberation Mono', monospace;font-size:13.33px;line-height:20px;color:#000;border-bottom:1px solid #c4c4c4">BILL_STRT</div>
<div style="position:absolute;left:169px;top:58px;width:41px;height:19px;box-sizing:border-box;background:#fff;padding-left:3px;text-align:left;white-space:pre;font-family:'Liberation Mono', monospace;font-size:13.33px;line-height:20px;color:#000;border-bottom:1px solid #c4c4c4">C</div>
<div style="position:absolute;left:211px;top:58px;width:39px;height:19px;box-sizing:border-box;background:#fff;padding-right:5px;text-align:right;white-space:pre;font-family:'Liberation Mono', monospace;font-size:13.33px;line-height:20px;color:#000;border-bottom:1px solid #c4c4c4">35</div>
<div style="position:absolute;left:251px;top:58px;width:39px;height:19px;box-sizing:border-box;background:#fff;padding-right:5px;text-align:right;white-space:pre;font-family:'Liberation Mono', monospace;font-size:13.33px;line-height:20px;color:#000;border-bottom:1px solid #c4c4c4"><span style="font-family:'Liberation Sans';font-size:14px;position:relative;top:-1px">0</span></div>
<div style="position:absolute;left:1px;top:77px;width:167px;height:19px;box-sizing:border-box;background:#fff;padding-left:4px;text-align:left;white-space:pre;font-family:'Liberation Mono', monospace;font-size:13.33px;line-height:20px;color:#000;border-bottom:1px solid #c4c4c4">BILL_CITY</div>
<div style="position:absolute;left:169px;top:77px;width:41px;height:19px;box-sizing:border-box;background:#fff;padding-left:3px;text-align:left;white-space:pre;font-family:'Liberation Mono', monospace;font-size:13.33px;line-height:20px;color:#000;border-bottom:1px solid #c4c4c4">C</div>
<div style="position:absolute;left:211px;top:77px;width:39px;height:19px;box-sizing:border-box;background:#fff;padding-right:5px;text-align:right;white-space:pre;font-family:'Liberation Mono', monospace;font-size:13.33px;line-height:20px;color:#000;border-bottom:1px solid #c4c4c4">35</div>
<div style="position:absolute;left:251px;top:77px;width:39px;height:19px;box-sizing:border-box;background:#fff;padding-right:5px;text-align:right;white-space:pre;font-family:'Liberation Mono', monospace;font-size:13.33px;line-height:20px;color:#000;border-bottom:1px solid #c4c4c4"><span style="font-family:'Liberation Sans';font-size:14px;position:relative;top:-1px">0</span></div>
<div style="position:absolute;left:1px;top:96px;width:167px;height:19px;box-sizing:border-box;background:#fff;padding-left:4px;text-align:left;white-space:pre;font-family:'Liberation Mono', monospace;font-size:13.33px;line-height:20px;color:#000;border-bottom:1px solid #c4c4c4">BILL_ZIP</div>
<div style="position:absolute;left:169px;top:96px;width:41px;height:19px;box-sizing:border-box;background:#fff;padding-left:3px;text-align:left;white-space:pre;font-family:'Liberation Mono', monospace;font-size:13.33px;line-height:20px;color:#000;border-bottom:1px solid #c4c4c4">C</div>
<div style="position:absolute;left:211px;top:96px;width:39px;height:19px;box-sizing:border-box;background:#fff;padding-right:5px;text-align:right;white-space:pre;font-family:'Liberation Mono', monospace;font-size:13.33px;line-height:20px;color:#000;border-bottom:1px solid #c4c4c4">10</div>
<div style="position:absolute;left:251px;top:96px;width:39px;height:19px;box-sizing:border-box;background:#fff;padding-right:5px;text-align:right;white-space:pre;font-family:'Liberation Mono', monospace;font-size:13.33px;line-height:20px;color:#000;border-bottom:1px solid #c4c4c4"><span style="font-family:'Liberation Sans';font-size:14px;position:relative;top:-1px">0</span></div>
<div style="position:absolute;left:1px;top:115px;width:167px;height:19px;box-sizing:border-box;background:#fff;padding-left:4px;text-align:left;white-space:pre;font-family:'Liberation Mono', monospace;font-size:13.33px;line-height:20px;color:#000;border-bottom:1px solid #c4c4c4">SHIP_NAME</div>
<div style="position:absolute;left:169px;top:115px;width:41px;height:19px;box-sizing:border-box;background:#fff;padding-left:3px;text-align:left;white-space:pre;font-family:'Liberation Mono', monospace;font-size:13.33px;line-height:20px;color:#000;border-bottom:1px solid #c4c4c4">C</div>
<div style="position:absolute;left:211px;top:115px;width:39px;height:19px;box-sizing:border-box;background:#fff;padding-right:5px;text-align:right;white-space:pre;font-family:'Liberation Mono', monospace;font-size:13.33px;line-height:20px;color:#000;border-bottom:1px solid #c4c4c4">35</div>
<div style="position:absolute;left:251px;top:115px;width:39px;height:19px;box-sizing:border-box;background:#fff;padding-right:5px;text-align:right;white-space:pre;font-family:'Liberation Mono', monospace;font-size:13.33px;line-height:20px;color:#000;border-bottom:1px solid #c4c4c4"><span style="font-family:'Liberation Sans';font-size:14px;position:relative;top:-1px">0</span></div>
<div style="position:absolute;left:1px;top:134px;width:167px;height:19px;box-sizing:border-box;background:#fff;padding-left:4px;text-align:left;white-space:pre;font-family:'Liberation Mono', monospace;font-size:13.33px;line-height:20px;color:#000;border-bottom:1px solid #c4c4c4">SHIP_STRT</div>
<div style="position:absolute;left:169px;top:134px;width:41px;height:19px;box-sizing:border-box;background:#fff;padding-left:3px;text-align:left;white-space:pre;font-family:'Liberation Mono', monospace;font-size:13.33px;line-height:20px;color:#000;border-bottom:1px solid #c4c4c4">C</div>
<div style="position:absolute;left:211px;top:134px;width:39px;height:19px;box-sizing:border-box;background:#fff;padding-right:5px;text-align:right;white-space:pre;font-family:'Liberation Mono', monospace;font-size:13.33px;line-height:20px;color:#000;border-bottom:1px solid #c4c4c4">35</div>
<div style="position:absolute;left:251px;top:134px;width:39px;height:19px;box-sizing:border-box;background:#fff;padding-right:5px;text-align:right;white-space:pre;font-family:'Liberation Mono', monospace;font-size:13.33px;line-height:20px;color:#000;border-bottom:1px solid #c4c4c4"><span style="font-family:'Liberation Sans';font-size:14px;position:relative;top:-1px">0</span></div>
<div style="position:absolute;left:1px;top:153px;width:167px;height:19px;box-sizing:border-box;background:#fff;padding-left:4px;text-align:left;white-space:pre;font-family:'Liberation Mono', monospace;font-size:13.33px;line-height:20px;color:#000;border-bottom:1px solid #c4c4c4">SHIP_CITY</div>
<div style="position:absolute;left:169px;top:153px;width:41px;height:19px;box-sizing:border-box;background:#fff;padding-left:3px;text-align:left;white-space:pre;font-family:'Liberation Mono', monospace;font-size:13.33px;line-height:20px;color:#000;border-bottom:1px solid #c4c4c4">C</div>
<div style="position:absolute;left:211px;top:153px;width:39px;height:19px;box-sizing:border-box;background:#fff;padding-right:5px;text-align:right;white-space:pre;font-family:'Liberation Mono', monospace;font-size:13.33px;line-height:20px;color:#000;border-bottom:1px solid #c4c4c4">35</div>
<div style="position:absolute;left:251px;top:153px;width:39px;height:19px;box-sizing:border-box;background:#fff;padding-right:5px;text-align:right;white-space:pre;font-family:'Liberation Mono', monospace;font-size:13.33px;line-height:20px;color:#000;border-bottom:1px solid #c4c4c4"><span style="font-family:'Liberation Sans';font-size:14px;position:relative;top:-1px">0</span></div>
<div style="position:absolute;left:1px;top:172px;width:167px;height:19px;box-sizing:border-box;background:#fff;padding-left:4px;text-align:left;white-space:pre;font-family:'Liberation Mono', monospace;font-size:13.33px;line-height:20px;color:#000;border-bottom:1px solid #c4c4c4">SHIP_ZIP</div>
<div style="position:absolute;left:169px;top:172px;width:41px;height:19px;box-sizing:border-box;background:#fff;padding-left:3px;text-align:left;white-space:pre;font-family:'Liberation Mono', monospace;font-size:13.33px;line-height:20px;color:#000;border-bottom:1px solid #c4c4c4">C</div>
<div style="position:absolute;left:211px;top:172px;width:39px;height:19px;box-sizing:border-box;background:#fff;padding-right:5px;text-align:right;white-space:pre;font-family:'Liberation Mono', monospace;font-size:13.33px;line-height:20px;color:#000;border-bottom:1px solid #c4c4c4">10</div>
<div style="position:absolute;left:251px;top:172px;width:39px;height:19px;box-sizing:border-box;background:#fff;padding-right:5px;text-align:right;white-space:pre;font-family:'Liberation Mono', monospace;font-size:13.33px;line-height:20px;color:#000;border-bottom:1px solid #c4c4c4"><span style="font-family:'Liberation Sans';font-size:14px;position:relative;top:-1px">0</span></div>
</div>
<div style="position:absolute;left:474px;top:643px;width:1px;height:176px;background:#a0a0a0"></div>
<div style="position:absolute;left:516px;top:643px;width:1px;height:176px;background:#a0a0a0"></div>
<div style="position:absolute;left:556px;top:643px;width:1px;height:176px;background:#a0a0a0"></div>
<div style="position:absolute;left:596px;top:620px;width:17px;height:200px;background:#c8c8c8;box-sizing:border-box;border-right:2px solid #7a7a7a;border-left:1px solid #f4f4f4"></div>
<div style="position:absolute;left:596px;top:621px;width:15px;height:16px;background:#f4f4f4;border-bottom:2px solid #808080;box-sizing:border-box"></div>
<svg style="position:absolute;left:600px;top:626px" width="7" height="4" viewBox="0 0 7 4"><path d="M0 4 L3.5 0 L7 4 Z" fill="#000"/></svg>
<div style="position:absolute;left:596px;top:637px;width:15px;height:58px;background:#f4f4f4;border-bottom:2px solid #808080;box-sizing:border-box"></div>
<div style="position:absolute;left:596px;top:803px;width:15px;height:16px;background:#f4f4f4;border-bottom:2px solid #808080;box-sizing:border-box"></div>
<svg style="position:absolute;left:600px;top:810px" width="7" height="4" viewBox="0 0 7 4"><path d="M0 0 L3.5 4 L7 0 Z" fill="#000"/></svg>
<div style="position:absolute;left:642px;top:620px;width:290px;height:200px;background:#fff"></div>
<div style="position:absolute;left:642px;top:620px;width:290px;height:23px;background:#6e6e6e"></div>
<div style="position:absolute;left:643px;top:621px;width:166px;height:21px;background:#7f7f7f;box-sizing:border-box;border-top:1px solid #a8a8a8;border-left:1px solid #a8a8a8"></div>
<div style="position:absolute;left:811px;top:621px;width:40px;height:21px;background:#7f7f7f;box-sizing:border-box;border-top:1px solid #a8a8a8;border-left:1px solid #a8a8a8"></div>
<div style="position:absolute;left:853px;top:621px;width:38px;height:21px;background:#7f7f7f;box-sizing:border-box;border-top:1px solid #a8a8a8;border-left:1px solid #a8a8a8"></div>
<div style="position:absolute;left:893px;top:621px;width:39px;height:21px;background:#7f7f7f;box-sizing:border-box;border-top:1px solid #a8a8a8;border-left:1px solid #a8a8a8"></div>
<div style="position:absolute;left:647px;top:623px;white-space:pre;font-family:'Liberation Mono', monospace;font-size:13.33px;line-height:17px;color:#e8e8e8">Field Name</div>
<div style="position:absolute;left:815px;top:623px;white-space:pre;font-family:'Liberation Mono', monospace;font-size:13.33px;line-height:17px;color:#e8e8e8">Type</div>
<div style="position:absolute;left:857px;top:623px;white-space:pre;font-family:'Liberation Mono', monospace;font-size:13.33px;line-height:17px;color:#e8e8e8">Len</div>
<div style="position:absolute;left:897px;top:623px;white-space:pre;font-family:'Liberation Mono', monospace;font-size:13.33px;line-height:17px;color:#e8e8e8">Dec</div>
<div style="position:absolute;left:642px;top:643px;width:290px;height:176px;overflow:hidden">
<div style="position:absolute;left:1px;top:1px;width:166px;height:19px;box-sizing:border-box;background:#fff;padding-left:4px;text-align:left;white-space:pre;font-family:'Liberation Mono', monospace;font-size:13.33px;line-height:20px;color:#000;border-bottom:1px solid #c4c4c4">INV_NMBR</div>
<div style="position:absolute;left:169px;top:1px;width:40px;height:19px;box-sizing:border-box;background:#fff;padding-left:3px;text-align:left;white-space:pre;font-family:'Liberation Mono', monospace;font-size:13.33px;line-height:20px;color:#000;border-bottom:1px solid #c4c4c4">C</div>
<div style="position:absolute;left:211px;top:1px;width:38px;height:19px;box-sizing:border-box;background:#fff;padding-right:5px;text-align:right;white-space:pre;font-family:'Liberation Mono', monospace;font-size:13.33px;line-height:20px;color:#000;border-bottom:1px solid #c4c4c4">10</div>
<div style="position:absolute;left:251px;top:1px;width:39px;height:19px;box-sizing:border-box;background:#fff;padding-left:11px;text-align:left;white-space:pre;font-family:'Liberation Mono', monospace;font-size:13.33px;line-height:20px;color:#000;border-bottom:1px solid #c4c4c4"><span style="font-family:'Liberation Sans';font-size:14px;position:relative;top:-1px">0</span></div>
<div style="position:absolute;left:1px;top:20px;width:166px;height:19px;box-sizing:border-box;background:#fff;padding-left:4px;text-align:left;white-space:pre;font-family:'Liberation Mono', monospace;font-size:13.33px;line-height:20px;color:#000;border-bottom:1px solid #c4c4c4">BALANCE</div>
<div style="position:absolute;left:169px;top:20px;width:40px;height:19px;box-sizing:border-box;background:#fff;padding-left:3px;text-align:left;white-space:pre;font-family:'Liberation Mono', monospace;font-size:13.33px;line-height:20px;color:#000;border-bottom:1px solid #c4c4c4">N</div>
<div style="position:absolute;left:211px;top:20px;width:38px;height:19px;box-sizing:border-box;background:#fff;padding-right:5px;text-align:right;white-space:pre;font-family:'Liberation Mono', monospace;font-size:13.33px;line-height:20px;color:#000;border-bottom:1px solid #c4c4c4">9</div>
<div style="position:absolute;left:251px;top:20px;width:39px;height:19px;box-sizing:border-box;background:#fff;padding-left:11px;text-align:left;white-space:pre;font-family:'Liberation Mono', monospace;font-size:13.33px;line-height:20px;color:#000;border-bottom:1px solid #c4c4c4">2</div>
<div style="position:absolute;left:1px;top:39px;width:166px;height:19px;box-sizing:border-box;background:#fff;padding-left:4px;text-align:left;white-space:pre;font-family:'Liberation Mono', monospace;font-size:13.33px;line-height:20px;color:#000;border-bottom:1px solid #c4c4c4">CUST_NAME</div>
<div style="position:absolute;left:169px;top:39px;width:40px;height:19px;box-sizing:border-box;background:#fff;padding-left:3px;text-align:left;white-space:pre;font-family:'Liberation Mono', monospace;font-size:13.33px;line-height:20px;color:#000;border-bottom:1px solid #c4c4c4">C</div>
<div style="position:absolute;left:211px;top:39px;width:38px;height:19px;box-sizing:border-box;background:#fff;padding-right:5px;text-align:right;white-space:pre;font-family:'Liberation Mono', monospace;font-size:13.33px;line-height:20px;color:#000;border-bottom:1px solid #c4c4c4">25</div>
<div style="position:absolute;left:251px;top:39px;width:39px;height:19px;box-sizing:border-box;background:#fff;padding-left:11px;text-align:left;white-space:pre;font-family:'Liberation Mono', monospace;font-size:13.33px;line-height:20px;color:#000;border-bottom:1px solid #c4c4c4"><span style="font-family:'Liberation Sans';font-size:14px;position:relative;top:-1px">0</span></div>
<div style="position:absolute;left:1px;top:58px;width:166px;height:19px;box-sizing:border-box;background:#fff;padding-left:4px;text-align:left;white-space:pre;font-family:'Liberation Mono', monospace;font-size:13.33px;line-height:20px;color:#000;border-bottom:1px solid #c4c4c4">PO_NMBR</div>
<div style="position:absolute;left:169px;top:58px;width:40px;height:19px;box-sizing:border-box;background:#fff;padding-left:3px;text-align:left;white-space:pre;font-family:'Liberation Mono', monospace;font-size:13.33px;line-height:20px;color:#000;border-bottom:1px solid #c4c4c4">C</div>
<div style="position:absolute;left:211px;top:58px;width:38px;height:19px;box-sizing:border-box;background:#fff;padding-right:5px;text-align:right;white-space:pre;font-family:'Liberation Mono', monospace;font-size:13.33px;line-height:20px;color:#000;border-bottom:1px solid #c4c4c4">10</div>
<div style="position:absolute;left:251px;top:58px;width:39px;height:19px;box-sizing:border-box;background:#fff;padding-left:11px;text-align:left;white-space:pre;font-family:'Liberation Mono', monospace;font-size:13.33px;line-height:20px;color:#000;border-bottom:1px solid #c4c4c4"><span style="font-family:'Liberation Sans';font-size:14px;position:relative;top:-1px">0</span></div>
<div style="position:absolute;left:1px;top:77px;width:166px;height:19px;box-sizing:border-box;background:#fff;padding-left:4px;text-align:left;white-space:pre;font-family:'Liberation Mono', monospace;font-size:13.33px;line-height:20px;color:#000;border-bottom:1px solid #c4c4c4">SHIP_DATE</div>
<div style="position:absolute;left:169px;top:77px;width:40px;height:19px;box-sizing:border-box;background:#fff;padding-left:3px;text-align:left;white-space:pre;font-family:'Liberation Mono', monospace;font-size:13.33px;line-height:20px;color:#000;border-bottom:1px solid #c4c4c4">D</div>
<div style="position:absolute;left:211px;top:77px;width:38px;height:19px;box-sizing:border-box;background:#fff;padding-right:5px;text-align:right;white-space:pre;font-family:'Liberation Mono', monospace;font-size:13.33px;line-height:20px;color:#000;border-bottom:1px solid #c4c4c4">8</div>
<div style="position:absolute;left:251px;top:77px;width:39px;height:19px;box-sizing:border-box;background:#fff;padding-left:11px;text-align:left;white-space:pre;font-family:'Liberation Mono', monospace;font-size:13.33px;line-height:20px;color:#000;border-bottom:1px solid #c4c4c4"><span style="font-family:'Liberation Sans';font-size:14px;position:relative;top:-1px">0</span></div>
<div style="position:absolute;left:1px;top:96px;width:166px;height:19px;box-sizing:border-box;background:#fff;padding-left:4px;text-align:left;white-space:pre;font-family:'Liberation Mono', monospace;font-size:13.33px;line-height:20px;color:#000;border-bottom:1px solid #c4c4c4">SALES</div>
<div style="position:absolute;left:169px;top:96px;width:40px;height:19px;box-sizing:border-box;background:#fff;padding-left:3px;text-align:left;white-space:pre;font-family:'Liberation Mono', monospace;font-size:13.33px;line-height:20px;color:#000;border-bottom:1px solid #c4c4c4">N</div>
<div style="position:absolute;left:211px;top:96px;width:38px;height:19px;box-sizing:border-box;background:#fff;padding-right:5px;text-align:right;white-space:pre;font-family:'Liberation Mono', monospace;font-size:13.33px;line-height:20px;color:#000;border-bottom:1px solid #c4c4c4">9</div>
<div style="position:absolute;left:251px;top:96px;width:39px;height:19px;box-sizing:border-box;background:#fff;padding-left:11px;text-align:left;white-space:pre;font-family:'Liberation Mono', monospace;font-size:13.33px;line-height:20px;color:#000;border-bottom:1px solid #c4c4c4">2</div>
<div style="position:absolute;left:1px;top:115px;width:166px;height:19px;box-sizing:border-box;background:#fff;padding-left:4px;text-align:left;white-space:pre;font-family:'Liberation Mono', monospace;font-size:13.33px;line-height:20px;color:#000;border-bottom:1px solid #c4c4c4">NET_SALES</div>
<div style="position:absolute;left:169px;top:115px;width:40px;height:19px;box-sizing:border-box;background:#fff;padding-left:3px;text-align:left;white-space:pre;font-family:'Liberation Mono', monospace;font-size:13.33px;line-height:20px;color:#000;border-bottom:1px solid #c4c4c4">N</div>
<div style="position:absolute;left:211px;top:115px;width:38px;height:19px;box-sizing:border-box;background:#fff;padding-right:5px;text-align:right;white-space:pre;font-family:'Liberation Mono', monospace;font-size:13.33px;line-height:20px;color:#000;border-bottom:1px solid #c4c4c4">9</div>
<div style="position:absolute;left:251px;top:115px;width:39px;height:19px;box-sizing:border-box;background:#fff;padding-left:11px;text-align:left;white-space:pre;font-family:'Liberation Mono', monospace;font-size:13.33px;line-height:20px;color:#000;border-bottom:1px solid #c4c4c4">2</div>
<div style="position:absolute;left:1px;top:134px;width:166px;height:19px;box-sizing:border-box;background:#0000f2;padding-left:4px;text-align:left;white-space:pre;font-family:'Liberation Mono', monospace;font-size:13.33px;line-height:20px;color:#fff;border-bottom:1px solid #c4c4c4">CUST_NMBR</div>
<div style="position:absolute;left:169px;top:134px;width:40px;height:19px;box-sizing:border-box;background:#0000f2;padding-left:3px;text-align:left;white-space:pre;font-family:'Liberation Mono', monospace;font-size:13.33px;line-height:20px;color:#fff;border-bottom:1px solid #c4c4c4">C</div>
<div style="position:absolute;left:211px;top:134px;width:38px;height:19px;box-sizing:border-box;background:#0000f2;padding-right:5px;text-align:right;white-space:pre;font-family:'Liberation Mono', monospace;font-size:13.33px;line-height:20px;color:#fff;border-bottom:1px solid #c4c4c4">5</div>
<div style="position:absolute;left:251px;top:134px;width:39px;height:19px;box-sizing:border-box;background:#0000f2;padding-left:11px;text-align:left;white-space:pre;font-family:'Liberation Mono', monospace;font-size:13.33px;line-height:20px;color:#fff;border-bottom:1px solid #c4c4c4"><span style="font-family:'Liberation Sans';font-size:14px;position:relative;top:-1px">0</span></div>
<div style="position:absolute;left:1px;top:153px;width:166px;height:19px;box-sizing:border-box;background:#fff;padding-left:4px;text-align:left;white-space:pre;font-family:'Liberation Mono', monospace;font-size:13.33px;line-height:20px;color:#000;border-bottom:1px solid #c4c4c4">TERMS</div>
<div style="position:absolute;left:169px;top:153px;width:40px;height:19px;box-sizing:border-box;background:#fff;padding-left:3px;text-align:left;white-space:pre;font-family:'Liberation Mono', monospace;font-size:13.33px;line-height:20px;color:#000;border-bottom:1px solid #c4c4c4">C</div>
<div style="position:absolute;left:211px;top:153px;width:38px;height:19px;box-sizing:border-box;background:#fff;padding-right:5px;text-align:right;white-space:pre;font-family:'Liberation Mono', monospace;font-size:13.33px;line-height:20px;color:#000;border-bottom:1px solid #c4c4c4">15</div>
<div style="position:absolute;left:251px;top:153px;width:39px;height:19px;box-sizing:border-box;background:#fff;padding-left:11px;text-align:left;white-space:pre;font-family:'Liberation Mono', monospace;font-size:13.33px;line-height:20px;color:#000;border-bottom:1px solid #c4c4c4"><span style="font-family:'Liberation Sans';font-size:14px;position:relative;top:-1px">0</span></div>
<div style="position:absolute;left:1px;top:172px;width:166px;height:19px;box-sizing:border-box;background:#fff;padding-left:4px;text-align:left;white-space:pre;font-family:'Liberation Mono', monospace;font-size:13.33px;line-height:20px;color:#000;border-bottom:1px solid #c4c4c4">DUE_DATE</div>
<div style="position:absolute;left:169px;top:172px;width:40px;height:19px;box-sizing:border-box;background:#fff;padding-left:3px;text-align:left;white-space:pre;font-family:'Liberation Mono', monospace;font-size:13.33px;line-height:20px;color:#000;border-bottom:1px solid #c4c4c4">D</div>
<div style="position:absolute;left:211px;top:172px;width:38px;height:19px;box-sizing:border-box;background:#fff;padding-right:5px;text-align:right;white-space:pre;font-family:'Liberation Mono', monospace;font-size:13.33px;line-height:20px;color:#000;border-bottom:1px solid #c4c4c4">8</div>
<div style="position:absolute;left:251px;top:172px;width:39px;height:19px;box-sizing:border-box;background:#fff;padding-left:11px;text-align:left;white-space:pre;font-family:'Liberation Mono', monospace;font-size:13.33px;line-height:20px;color:#000;border-bottom:1px solid #c4c4c4"><span style="font-family:'Liberation Sans';font-size:14px;position:relative;top:-1px">0</span></div>
</div>
<div style="position:absolute;left:809px;top:643px;width:2px;height:176px;background:#a0a0a0"></div>
<div style="position:absolute;left:851px;top:643px;width:2px;height:176px;background:#a0a0a0"></div>
<div style="position:absolute;left:891px;top:643px;width:2px;height:176px;background:#a0a0a0"></div>
<div style="position:absolute;left:932px;top:620px;width:17px;height:200px;background:#c8c8c8;box-sizing:border-box;border-right:2px solid #7a7a7a;border-left:1px solid #f4f4f4"></div>
<div style="position:absolute;left:932px;top:621px;width:15px;height:16px;background:#f4f4f4;border-bottom:2px solid #808080;box-sizing:border-box"></div>
<svg style="position:absolute;left:936px;top:626px" width="7" height="4" viewBox="0 0 7 4"><path d="M0 4 L3.5 0 L7 4 Z" fill="#000"/></svg>
<div style="position:absolute;left:932px;top:684px;width:15px;height:53px;background:#f4f4f4;border-bottom:2px solid #808080;box-sizing:border-box"></div>
<div style="position:absolute;left:932px;top:803px;width:15px;height:16px;background:#f4f4f4;border-bottom:2px solid #808080;box-sizing:border-box"></div>
<svg style="position:absolute;left:936px;top:810px" width="7" height="4" viewBox="0 0 7 4"><path d="M0 0 L3.5 4 L7 0 Z" fill="#000"/></svg>
<div style="position:absolute;left:306px;top:839px;width:90px;height:21px;box-sizing:border-box;background:#f0f0f0;border-top:1px solid #fff;border-left:1px solid #fff;border-right:1px solid #696969;border-bottom:1px solid #696969;box-shadow:inset -1px -1px 0 #a0a0a0"></div>
<div style="position:absolute;left:306px;top:842px;width:90px;text-align:center;font-family:'Liberation Sans', sans-serif;font-size:11px;line-height:14px;color:#000;letter-spacing:-0.2px;white-space:pre"><u>O</u>k</div>
<div style="position:absolute;left:406px;top:839px;width:90px;height:21px;box-sizing:border-box;background:#f0f0f0;border-top:1px solid #fff;border-left:1px solid #fff;border-right:1px solid #696969;border-bottom:1px solid #696969;box-shadow:inset -1px -1px 0 #a0a0a0"></div>
<div style="position:absolute;left:406px;top:842px;width:90px;text-align:center;font-family:'Liberation Sans', sans-serif;font-size:11px;line-height:14px;color:#000;letter-spacing:-0.2px;white-space:pre"><u>C</u>ancel</div>
</body></html>
